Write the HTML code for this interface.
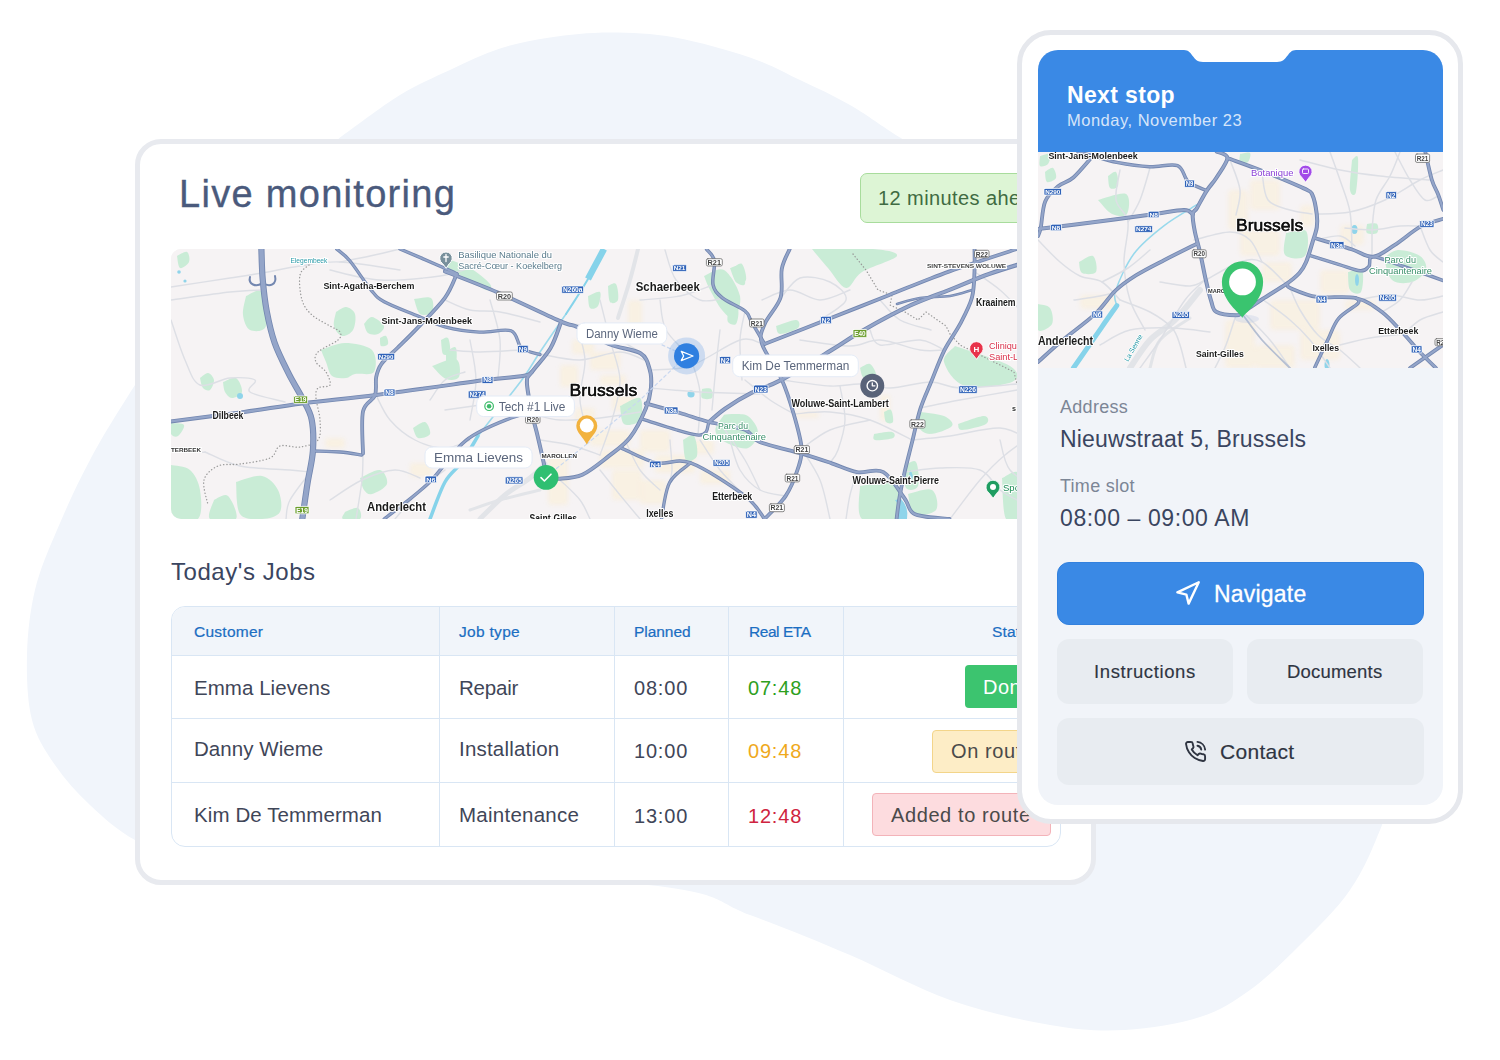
<!DOCTYPE html>
<html lang="en">
<head>
<meta charset="utf-8">
<title>Live monitoring</title>
<style>
*{box-sizing:border-box;margin:0;padding:0}
html,body{width:1500px;height:1060px;overflow:hidden;background:#fff}
body{position:relative;font-family:"Liberation Sans",Arial,sans-serif;color:#3a4560}
.abs{position:absolute}
.t{position:absolute;white-space:nowrap;line-height:1}
#blob{position:absolute;left:0;top:0;width:1500px;height:1060px}
#card{position:absolute;left:135px;top:139px;width:961px;height:746px;background:#fff;border:5px solid #e8eaef;border-radius:26px;overflow:hidden}
#cardin{position:absolute;left:-140px;top:-144px;width:1500px;height:1060px}
#map1{position:absolute;left:171px;top:249px;width:889px;height:270px;border-radius:10px;overflow:hidden;background:#f6f3f4}
#ahead{position:absolute;left:860px;top:173px;width:200px;height:50px;background:#ddf5d5;border:1px solid #a8dc9c;border-radius:7px}
#tbl{position:absolute;left:171px;top:606px;width:890px;height:241px;border:1px solid #d9e6f4;border-radius:14px;overflow:hidden;background:#fff}
#tbl .hd{position:absolute;left:0;top:0;width:100%;height:48px;background:#f1f5fa}
#tbl .hl{position:absolute;left:0;width:100%;height:1px;background:#d9e6f4}
#tbl .vl{position:absolute;top:0;height:100%;width:1px;background:#d9e6f4}
.th{color:#1b6ec2;font-size:15.5px;-webkit-text-stroke:0.22px #1b6ec2}
.td{color:#3f4658;font-size:20px}
.badge{position:absolute;height:43px;border-radius:4px;font-size:20px}
#phone{position:absolute;left:1017px;top:30px;width:446px;height:794px;background:#fff;border:5.5px solid #e6e8ed;border-radius:34px}
#screen{position:absolute;left:1038px;top:50px;width:405px;height:755px;background:#f1f4f9;border-radius:20px;overflow:hidden}
#scin{position:absolute;left:-1038px;top:-50px;width:1500px;height:1060px}
#phead{position:absolute;left:1038px;top:50px;width:405px;height:102px;background:#3a89e5}
#map2{position:absolute;left:1038px;top:152px;width:405px;height:216px;overflow:hidden;background:#f6f5f6}
.btn{position:absolute;border-radius:12px;background:#e8ecf1}
</style>
</head>
<body>
<svg id="blob" viewBox="0 0 1500 1060"><path d="M340.0 137.5 C350.0 130.4 381.7 106.2 400.0 95.0 C418.3 83.8 433.3 77.8 450.0 70.0 C466.7 62.2 483.3 53.9 500.0 48.5 C516.7 43.1 531.7 40.2 550.0 37.5 C568.3 34.8 589.2 32.5 610.0 32.5 C630.8 32.5 651.7 33.3 675.0 37.5 C698.3 41.7 729.2 50.4 750.0 57.5 C770.8 64.6 783.3 72.1 800.0 80.0 C816.7 87.9 833.3 95.4 850.0 105.0 C866.7 114.6 875.0 121.7 900.0 137.5 C925.0 153.3 958.3 171.2 1000.0 200.0 C1041.7 228.8 1100.0 266.7 1150.0 310.0 C1200.0 353.3 1258.3 408.3 1300.0 460.0 C1341.7 511.7 1380.3 576.7 1400.0 620.0 C1419.7 663.3 1421.0 685.8 1418.0 720.0 C1415.0 754.2 1393.3 796.7 1382.0 825.0 C1370.7 853.3 1363.7 870.0 1350.0 890.0 C1336.3 910.0 1316.7 928.3 1300.0 945.0 C1283.3 961.7 1266.7 978.0 1250.0 990.0 C1233.3 1002.0 1220.8 1010.3 1200.0 1017.0 C1179.2 1023.7 1150.0 1028.7 1125.0 1030.0 C1100.0 1031.3 1079.2 1030.0 1050.0 1025.0 C1020.8 1020.0 983.3 1011.7 950.0 1000.0 C916.7 988.3 883.3 969.2 850.0 955.0 C816.7 940.8 780.8 926.3 750.0 915.0 C719.2 903.7 723.3 894.5 665.0 887.0 C606.7 879.5 477.5 873.7 400.0 870.0 C322.5 866.3 244.2 870.0 200.0 865.0 C155.8 860.0 153.3 850.0 135.0 840.0 C116.7 830.0 103.3 817.5 90.0 805.0 C76.7 792.5 64.7 779.2 55.0 765.0 C45.3 750.8 36.7 738.3 32.0 720.0 C27.3 701.7 26.5 676.7 27.0 655.0 C27.5 633.3 30.0 610.8 35.0 590.0 C40.0 569.2 47.8 551.7 57.0 530.0 C66.2 508.3 77.0 484.2 90.0 460.0 C103.0 435.8 111.7 421.7 135.0 385.0 C158.3 348.3 195.8 281.2 230.0 240.0 C264.2 198.8 321.7 154.6 340.0 137.5Z" fill="#f1f5fb"/></svg>

<div id="card"><div id="cardin">
  <div class="t" id="ttl" style="left:179px;top:174.5px;font-size:38px;letter-spacing:1.3px;color:#4a5a7c;-webkit-text-stroke:0.35px #4a5a7c">Live monitoring</div>
  <div id="ahead"></div>
  <div class="t" id="aheadt" style="left:878px;top:188px;font-size:20px;letter-spacing:0.42px;color:#3f6b42">12 minutes ahead</div>
  <div id="map1"><svg width="889" height="270" viewBox="171 249 889 270" font-family="Liberation Sans, Arial, sans-serif" fill="none" stroke-linecap="round" stroke-linejoin="round"><rect x="171" y="249" width="889" height="270" fill="#f6f3f4"/><filter id="bl1" x="-20%" y="-20%" width="140%" height="140%"><feGaussianBlur stdDeviation="2.2"/></filter><g fill="#fbeed2" stroke="none" filter="url(#bl1)" opacity="0.6"><rect x="572" y="340" width="22" height="14" rx="3" opacity="0.85"/><rect x="590" y="352" width="30" height="18" rx="3" opacity="0.85"/><rect x="560" y="365" width="18" height="22" rx="3" opacity="0.85"/><rect x="600" y="375" width="26" height="10" rx="3" opacity="0.85"/><rect x="612" y="395" width="24" height="16" rx="3" opacity="0.85"/><rect x="575" y="408" width="20" height="14" rx="3" opacity="0.85"/><rect x="590" y="430" width="40" height="16" rx="3" opacity="0.85"/><rect x="600" y="450" width="44" height="18" rx="3" opacity="0.85"/><rect x="640" y="430" width="30" height="22" rx="3" opacity="0.85"/><rect x="655" y="455" width="40" height="18" rx="3" opacity="0.85"/><rect x="690" y="440" width="24" height="14" rx="3" opacity="0.85"/><rect x="628" y="300" width="14" height="30" rx="3" opacity="0.85"/><rect x="612" y="470" width="30" height="30" rx="3" opacity="0.85"/><rect x="548" y="455" width="20" height="50" rx="3" opacity="0.85"/><rect x="640" y="480" width="26" height="24" rx="3" opacity="0.85"/><rect x="700" y="470" width="30" height="14" rx="3" opacity="0.85"/><rect x="880" y="395" width="10" height="26" rx="3" opacity="0.85"/><rect x="795" y="412" width="24" height="6" rx="3" opacity="0.85"/><rect x="325" y="438" width="20" height="10" rx="3" opacity="0.85"/><rect x="410" y="463" width="22" height="14" rx="3" opacity="0.85"/></g><g><path d="M177.0 256.0 C178.7 255.3 185.0 251.0 187.0 252.0 C189.0 253.0 190.2 259.3 189.0 262.0 C187.8 264.7 182.0 269.0 180.0 268.0 C178.0 267.0 177.5 258.0 177.0 256.0Z" fill="#c9ecd6" stroke="none"/><path d="M246.0 296.0 C248.7 295.3 258.7 287.0 262.0 292.0 C265.3 297.0 268.0 319.7 266.0 326.0 C264.0 332.3 253.8 331.8 250.0 330.0 C246.2 328.2 243.7 320.7 243.0 315.0 C242.3 309.3 245.5 299.2 246.0 296.0Z" fill="#c9ecd6" stroke="none"/><path d="M336.0 312.0 C337.7 311.2 342.8 306.7 346.0 307.0 C349.2 307.3 353.8 310.2 355.0 314.0 C356.2 317.8 355.2 326.3 353.0 330.0 C350.8 333.7 345.2 336.7 342.0 336.0 C338.8 335.3 335.0 330.0 334.0 326.0 C333.0 322.0 335.7 314.3 336.0 312.0Z" fill="#c9ecd6" stroke="none"/><path d="M321.0 350.0 C325.0 348.8 336.5 343.0 345.0 343.0 C353.5 343.0 367.2 345.2 372.0 350.0 C376.8 354.8 376.8 368.0 374.0 372.0 C371.2 376.0 359.7 373.0 355.0 374.0 C350.3 375.0 349.8 377.7 346.0 378.0 C342.2 378.3 335.3 378.7 332.0 376.0 C328.7 373.3 327.8 366.3 326.0 362.0 C324.2 357.7 321.8 352.0 321.0 350.0Z" fill="#c9ecd6" stroke="none"/><path d="M364.0 324.0 C365.3 322.8 368.7 316.7 372.0 317.0 C375.3 317.3 383.0 323.2 384.0 326.0 C385.0 328.8 380.7 332.8 378.0 334.0 C375.3 335.2 370.3 334.7 368.0 333.0 C365.7 331.3 364.7 325.5 364.0 324.0Z" fill="#c9ecd6" stroke="none"/><path d="M380.0 338.0 C381.0 337.7 384.7 335.0 386.0 336.0 C387.3 337.0 388.8 342.3 388.0 344.0 C387.2 345.7 382.3 347.0 381.0 346.0 C379.7 345.0 380.2 339.3 380.0 338.0Z" fill="#c9ecd6" stroke="none"/><path d="M414.0 299.0 C416.8 298.8 428.0 295.8 431.0 298.0 C434.0 300.2 433.8 309.3 432.0 312.0 C430.2 314.7 423.0 316.2 420.0 314.0 C417.0 311.8 415.0 301.5 414.0 299.0Z" fill="#c9ecd6" stroke="none"/><path d="M432.0 366.0 C436.0 364.8 451.5 357.2 456.0 359.0 C460.5 360.8 460.7 373.7 459.0 377.0 C457.3 380.3 450.5 380.8 446.0 379.0 C441.5 377.2 434.3 368.2 432.0 366.0Z" fill="#c9ecd6" stroke="none"/><path d="M441.0 340.0 C442.2 339.7 446.5 336.0 448.0 338.0 C449.5 340.0 450.8 349.3 450.0 352.0 C449.2 354.7 444.5 356.0 443.0 354.0 C441.5 352.0 441.3 342.3 441.0 340.0Z" fill="#c9ecd6" stroke="none"/><path d="M200.0 378.0 C201.3 377.2 205.7 372.7 208.0 373.0 C210.3 373.3 213.7 377.2 214.0 380.0 C214.3 382.8 211.8 388.7 210.0 390.0 C208.2 391.3 204.7 390.0 203.0 388.0 C201.3 386.0 200.5 379.7 200.0 378.0Z" fill="#c9ecd6" stroke="none"/><path d="M223.0 382.0 C225.2 381.3 232.8 376.3 236.0 378.0 C239.2 379.7 242.7 388.7 242.0 392.0 C241.3 395.3 234.8 398.0 232.0 398.0 C229.2 398.0 226.5 394.7 225.0 392.0 C223.5 389.3 223.3 383.7 223.0 382.0Z" fill="#c9ecd6" stroke="none"/><path d="M413.0 428.0 C415.0 427.0 422.2 421.0 425.0 422.0 C427.8 423.0 431.2 431.3 430.0 434.0 C428.8 436.7 420.8 439.0 418.0 438.0 C415.2 437.0 413.8 429.7 413.0 428.0Z" fill="#c9ecd6" stroke="none"/><path d="M360.0 478.0 C363.3 476.7 375.5 469.0 380.0 470.0 C384.5 471.0 388.3 480.0 387.0 484.0 C385.7 488.0 375.8 493.0 372.0 494.0 C368.2 495.0 366.0 492.7 364.0 490.0 C362.0 487.3 360.7 480.0 360.0 478.0Z" fill="#c9ecd6" stroke="none"/><path d="M171.0 465.0 C174.2 465.8 185.2 465.8 190.0 470.0 C194.8 474.2 198.7 481.8 200.0 490.0 C201.3 498.2 202.8 514.2 198.0 519.0 C193.2 523.8 175.5 528.0 171.0 519.0 C166.5 510.0 171.0 474.0 171.0 465.0Z" fill="#c9ecd6" stroke="none"/><path d="M171.0 423.0 C173.2 423.3 182.8 422.8 184.0 425.0 C185.2 427.2 180.2 434.5 178.0 436.0 C175.8 437.5 172.2 436.2 171.0 434.0 C169.8 431.8 171.0 424.8 171.0 423.0Z" fill="#c9ecd6" stroke="none"/><path d="M236.0 482.0 C240.3 481.0 255.0 474.7 262.0 476.0 C269.0 477.3 275.0 484.0 278.0 490.0 C281.0 496.0 282.7 507.2 280.0 512.0 C277.3 516.8 268.7 518.7 262.0 519.0 C255.3 519.3 244.3 520.2 240.0 514.0 C235.7 507.8 236.7 487.3 236.0 482.0Z" fill="#c9ecd6" stroke="none"/><path d="M214.0 500.0 C216.3 499.3 224.3 492.8 228.0 496.0 C231.7 499.2 239.0 515.2 236.0 519.0 C233.0 522.8 213.7 522.2 210.0 519.0 C206.3 515.8 213.3 503.2 214.0 500.0Z" fill="#c9ecd6" stroke="none"/><path d="M345.0 512.0 C347.2 511.3 355.5 506.8 358.0 508.0 C360.5 509.2 362.5 517.2 360.0 519.0 C357.5 520.8 345.5 520.2 343.0 519.0 C340.5 517.8 344.7 513.2 345.0 512.0Z" fill="#c9ecd6" stroke="none"/><path d="M446.0 352.0 C447.7 351.3 454.5 344.7 456.0 348.0 C457.5 351.3 456.5 367.3 455.0 372.0 C453.5 376.7 448.5 379.3 447.0 376.0 C445.5 372.7 446.2 356.0 446.0 352.0Z" fill="#c9ecd6" stroke="none"/><path d="M445.0 258.0 C449.2 259.7 462.5 263.7 470.0 268.0 C477.5 272.3 487.3 280.3 490.0 284.0 C492.7 287.7 490.7 291.3 486.0 290.0 C481.3 288.7 468.8 279.3 462.0 276.0 C455.2 272.7 447.8 273.0 445.0 270.0 C442.2 267.0 445.0 260.0 445.0 258.0Z" fill="#c9ecd6" stroke="none"/><path d="M588.0 296.0 C590.0 295.3 598.3 290.3 600.0 292.0 C601.7 293.7 599.7 303.3 598.0 306.0 C596.3 308.7 591.7 309.7 590.0 308.0 C588.3 306.3 588.3 298.0 588.0 296.0Z" fill="#c9ecd6" stroke="none"/><path d="M608.0 286.0 C609.3 285.7 614.3 281.7 616.0 284.0 C617.7 286.3 619.0 297.0 618.0 300.0 C617.0 303.0 611.7 304.3 610.0 302.0 C608.3 299.7 608.3 288.7 608.0 286.0Z" fill="#c9ecd6" stroke="none"/><path d="M620.0 406.0 C623.3 404.7 636.7 395.7 640.0 398.0 C643.3 400.3 642.7 415.7 640.0 420.0 C637.3 424.3 627.3 426.3 624.0 424.0 C620.7 421.7 620.7 409.0 620.0 406.0Z" fill="#c9ecd6" stroke="none"/><path d="M683.0 440.0 C684.8 439.3 691.7 433.3 694.0 436.0 C696.3 438.7 698.3 452.0 697.0 456.0 C695.7 460.0 688.3 462.7 686.0 460.0 C683.7 457.3 683.5 443.3 683.0 440.0Z" fill="#c9ecd6" stroke="none"/><path d="M702.0 389.0 C703.5 389.0 709.3 387.5 711.0 389.0 C712.7 390.5 713.5 396.5 712.0 398.0 C710.5 399.5 703.7 399.5 702.0 398.0 C700.3 396.5 702.0 390.5 702.0 389.0Z" fill="#c9ecd6" stroke="none"/><path d="M704.0 276.0 C707.3 275.0 718.0 266.7 724.0 270.0 C730.0 273.3 738.3 288.0 740.0 296.0 C741.7 304.0 737.0 315.7 734.0 318.0 C731.0 320.3 726.0 314.7 722.0 310.0 C718.0 305.3 713.0 295.7 710.0 290.0 C707.0 284.3 705.0 278.3 704.0 276.0Z" fill="#c9ecd6" stroke="none"/><path d="M730.0 268.0 C732.0 267.7 739.5 263.3 742.0 266.0 C744.5 268.7 746.0 281.3 745.0 284.0 C744.0 286.7 738.5 284.7 736.0 282.0 C733.5 279.3 731.0 270.3 730.0 268.0Z" fill="#c9ecd6" stroke="none"/><path d="M724.0 414.7 C726.0 414.6 731.9 413.7 736.0 414.0 C740.1 414.3 745.2 413.6 748.9 416.7 C752.6 419.8 758.2 427.2 758.0 432.5 C757.8 437.8 753.2 446.7 747.5 448.2 C741.8 449.7 729.4 444.7 724.0 441.6 C718.6 438.5 715.4 434.3 715.4 429.8 C715.4 425.3 722.6 417.2 724.0 414.7Z" fill="#c9ecd6" stroke="none"/><path d="M728.0 312.0 C729.7 311.7 736.7 308.0 738.0 310.0 C739.3 312.0 737.7 322.0 736.0 324.0 C734.3 326.0 729.3 324.0 728.0 322.0 C726.7 320.0 728.0 313.7 728.0 312.0Z" fill="#c9ecd6" stroke="none"/><path d="M812.0 249.0 C822.2 249.0 858.8 247.8 873.0 249.0 C887.2 250.2 898.8 252.2 897.0 256.0 C895.2 259.8 870.5 266.7 862.0 272.0 C853.5 277.3 851.7 288.7 846.0 288.0 C840.3 287.3 833.7 274.5 828.0 268.0 C822.3 261.5 814.7 252.2 812.0 249.0Z" fill="#c9ecd6" stroke="none"/><path d="M733.0 268.0 C734.5 267.3 739.8 262.0 742.0 264.0 C744.2 266.0 747.0 277.0 746.0 280.0 C745.0 283.0 738.2 284.0 736.0 282.0 C733.8 280.0 733.5 270.3 733.0 268.0Z" fill="#c9ecd6" stroke="none"/><path d="M776.0 326.0 C779.3 325.0 792.3 319.7 796.0 320.0 C799.7 320.3 800.7 325.7 798.0 328.0 C795.3 330.3 783.7 334.3 780.0 334.0 C776.3 333.7 776.7 327.3 776.0 326.0Z" fill="#c9ecd6" stroke="none"/><path d="M860.0 368.0 C861.7 367.3 867.3 362.7 870.0 364.0 C872.7 365.3 877.0 373.7 876.0 376.0 C875.0 378.3 866.7 379.3 864.0 378.0 C861.3 376.7 860.7 369.7 860.0 368.0Z" fill="#c9ecd6" stroke="none"/><path d="M955.0 346.0 C964.2 349.3 1000.5 360.0 1010.0 366.0 C1019.5 372.0 1019.5 378.7 1012.0 382.0 C1004.5 385.3 976.3 389.3 965.0 386.0 C953.7 382.7 945.7 368.7 944.0 362.0 C942.3 355.3 953.2 348.7 955.0 346.0Z" fill="#c9ecd6" stroke="none"/><path d="M920.0 412.0 C924.0 412.7 938.7 413.7 944.0 416.0 C949.3 418.3 954.3 423.0 952.0 426.0 C949.7 429.0 935.7 434.0 930.0 434.0 C924.3 434.0 919.7 429.7 918.0 426.0 C916.3 422.3 919.7 414.3 920.0 412.0Z" fill="#c9ecd6" stroke="none"/><path d="M958.0 424.0 C962.3 422.7 979.3 416.0 984.0 416.0 C988.7 416.0 989.7 421.7 986.0 424.0 C982.3 426.3 966.7 430.0 962.0 430.0 C957.3 430.0 958.7 425.0 958.0 424.0Z" fill="#c9ecd6" stroke="none"/><path d="M874.0 434.0 C877.0 433.7 888.8 431.3 892.0 432.0 C895.2 432.7 895.8 436.7 893.0 438.0 C890.2 439.3 878.2 440.7 875.0 440.0 C871.8 439.3 874.2 435.0 874.0 434.0Z" fill="#c9ecd6" stroke="none"/><path d="M884.0 412.0 C885.2 411.7 889.5 408.3 891.0 410.0 C892.5 411.7 893.8 420.0 893.0 422.0 C892.2 424.0 887.5 423.7 886.0 422.0 C884.5 420.3 884.3 413.7 884.0 412.0Z" fill="#c9ecd6" stroke="none"/><path d="M860.0 486.0 C865.7 485.7 887.7 478.5 894.0 484.0 C900.3 489.5 903.3 513.2 898.0 519.0 C892.7 524.8 868.3 524.5 862.0 519.0 C855.7 513.5 860.3 491.5 860.0 486.0Z" fill="#c9ecd6" stroke="none"/><path d="M908.0 494.0 C912.0 493.3 927.3 487.3 932.0 490.0 C936.7 492.7 939.0 506.0 936.0 510.0 C933.0 514.0 918.7 516.7 914.0 514.0 C909.3 511.3 909.0 497.3 908.0 494.0Z" fill="#c9ecd6" stroke="none"/><path d="M904.0 466.0 C906.0 465.3 913.7 458.7 916.0 462.0 C918.3 465.3 919.7 481.7 918.0 486.0 C916.3 490.3 908.3 491.3 906.0 488.0 C903.7 484.7 904.3 469.7 904.0 466.0Z" fill="#c9ecd6" stroke="none"/><path d="M1002.0 478.0 C1005.0 477.3 1016.3 467.2 1020.0 474.0 C1023.7 480.8 1026.3 511.5 1024.0 519.0 C1021.7 526.5 1009.7 525.8 1006.0 519.0 C1002.3 512.2 1002.7 484.8 1002.0 478.0Z" fill="#c9ecd6" stroke="none"/></g><g stroke="#86d3ea"><path d="M604.0 249.0 C602.7 251.5 598.7 259.0 596.0 264.0 C593.3 269.0 589.3 276.5 588.0 279.0" stroke-width="6.5" stroke-linecap="butt"/><path d="M588.0 279.0 C586.2 282.0 580.7 291.2 577.0 297.0 C573.3 302.8 567.8 311.2 566.0 314.0" stroke-width="2"/><path d="M566.0 314.0 C561.7 320.3 547.0 341.5 540.0 352.0 C533.0 362.5 530.7 367.7 524.0 377.0 C517.3 386.3 507.7 398.2 500.0 408.0 C492.3 417.8 481.7 431.3 478.0 436.0" stroke-width="1.6" opacity="0.8"/><path d="M478.0 436.0 C475.3 440.3 467.5 454.3 462.0 462.0 C456.5 469.7 450.3 472.5 445.0 482.0 C439.7 491.5 432.5 512.8 430.0 519.0" stroke-width="3.5"/></g><g fill="#8fd4ea" stroke="none"><circle cx="240" cy="396" r="3"/><circle cx="179" cy="272" r="1.8"/><circle cx="185" cy="281" r="1.6"/><circle cx="691" cy="394" r="3.6"/><path d="M895 500 q6 6 2 19 h10 q2 -12 -6 -20z"/><path d="M910 470 q4 4 2 10 q-4 -2 -2 -10z"/></g><g stroke="#e2e4e8"><path d="M638.0 249.0 C636.7 254.2 633.3 268.5 630.0 280.0 C626.7 291.5 620.0 311.7 618.0 318.0" stroke-width="4"/><path d="M480.0 519.0 C484.2 515.0 496.7 501.8 505.0 495.0 C513.3 488.2 523.3 483.2 530.0 478.0 C536.7 472.8 542.5 466.3 545.0 464.0" stroke-width="5"/><path d="M470.0 510.0 C475.0 508.3 488.3 503.3 500.0 500.0 C511.7 496.7 533.3 491.7 540.0 490.0" stroke-width="3"/></g><g><path d="M171.0 287.0 C180.8 285.5 214.8 280.3 230.0 278.0 C245.2 275.7 250.3 275.0 262.0 273.0 C273.7 271.0 287.0 267.8 300.0 266.0 C313.0 264.2 323.3 261.3 340.0 262.0 C356.7 262.7 390.0 268.7 400.0 270.0" stroke="#dddfe5" stroke-width="1.4"/><path d="M171.0 300.0 C180.8 298.7 214.8 293.7 230.0 292.0 C245.2 290.3 256.7 290.3 262.0 290.0" stroke="#dddfe5" stroke-width="1.4"/><path d="M171.0 320.0 C173.3 326.7 180.2 349.2 185.0 360.0 C189.8 370.8 192.5 382.0 200.0 385.0 C207.5 388.0 220.8 378.8 230.0 378.0 C239.2 377.2 251.7 377.7 255.0 380.0 C258.3 382.3 245.0 388.3 250.0 392.0 C255.0 395.7 279.2 400.3 285.0 402.0" stroke="#dddfe5" stroke-width="1.4"/><path d="M205.0 452.0 C210.8 454.3 225.8 463.0 240.0 466.0 C254.2 469.0 278.3 469.0 290.0 470.0 C301.7 471.0 306.7 471.7 310.0 472.0" stroke="#dddfe5" stroke-width="1.4"/><path d="M340.0 262.0 C345.0 261.0 360.0 258.2 370.0 256.0 C380.0 253.8 395.0 250.2 400.0 249.0" stroke="#dddfe5" stroke-width="1.4"/><path d="M330.0 270.0 C338.3 271.7 361.7 279.0 380.0 280.0 C398.3 281.0 425.0 278.0 440.0 276.0 C455.0 274.0 465.0 269.3 470.0 268.0" stroke="#dddfe5" stroke-width="1.4"/><path d="M376.0 395.0 C378.3 399.2 383.5 412.5 390.0 420.0 C396.5 427.5 405.8 435.3 415.0 440.0 C424.2 444.7 435.8 448.0 445.0 448.0 C454.2 448.0 465.8 441.3 470.0 440.0" stroke="#dddfe5" stroke-width="1.4"/><path d="M430.0 400.0 C432.5 396.7 439.2 384.7 445.0 380.0 C450.8 375.3 461.7 373.3 465.0 372.0" stroke="#dddfe5" stroke-width="1.4"/><path d="M363.0 454.0 C362.8 458.3 363.2 469.2 362.0 480.0 C360.8 490.8 357.0 512.5 356.0 519.0" stroke="#dddfe5" stroke-width="1.4"/><path d="M330.0 500.0 C335.3 496.7 351.2 485.0 362.0 480.0 C372.8 475.0 385.3 470.3 395.0 470.0 C404.7 469.7 415.8 476.7 420.0 478.0" stroke="#dddfe5" stroke-width="1.4"/><path d="M312.0 470.0 C308.3 475.0 294.3 491.8 290.0 500.0 C285.7 508.2 286.7 515.8 286.0 519.0" stroke="#dddfe5" stroke-width="1.4"/><path d="M395.0 519.0 C399.2 514.2 411.7 498.2 420.0 490.0 C428.3 481.8 440.8 473.3 445.0 470.0" stroke="#dddfe5" stroke-width="1.4"/><path d="M445.0 300.0 C449.2 301.7 460.8 308.0 470.0 310.0 C479.2 312.0 488.3 310.0 500.0 312.0 C511.7 314.0 533.3 320.3 540.0 322.0" stroke="#dddfe5" stroke-width="1.4"/><path d="M470.0 340.0 C471.0 346.7 476.0 366.7 476.0 380.0 C476.0 393.3 471.0 413.3 470.0 420.0" stroke="#dddfe5" stroke-width="1.4"/><path d="M490.0 300.0 C491.7 306.7 498.7 327.0 500.0 340.0 C501.3 353.0 498.3 371.7 498.0 378.0" stroke="#dddfe5" stroke-width="1.4"/><path d="M445.0 410.0 C450.8 409.2 466.7 407.0 480.0 405.0 C493.3 403.0 517.5 399.2 525.0 398.0" stroke="#dddfe5" stroke-width="1.4"/><path d="M450.0 350.0 C455.0 350.3 468.3 352.0 480.0 352.0 C491.7 352.0 513.3 350.3 520.0 350.0" stroke="#dddfe5" stroke-width="1.4"/><path d="M560.0 322.0 C566.7 323.3 586.7 325.0 600.0 330.0 C613.3 335.0 633.3 348.3 640.0 352.0" stroke="#dddfe5" stroke-width="1.4"/><path d="M577.0 326.0 C578.3 331.7 584.5 347.7 585.0 360.0 C585.5 372.3 579.2 386.7 580.0 400.0 C580.8 413.3 588.3 433.3 590.0 440.0" stroke="#dddfe5" stroke-width="1.4"/><path d="M600.0 300.0 C601.7 306.7 606.7 326.7 610.0 340.0 C613.3 353.3 619.7 366.7 620.0 380.0 C620.3 393.3 615.3 407.5 612.0 420.0 C608.7 432.5 602.0 449.2 600.0 455.0" stroke="#dddfe5" stroke-width="1.4"/><path d="M540.0 354.0 C546.7 355.0 566.7 360.3 580.0 360.0 C593.3 359.7 608.7 351.7 620.0 352.0 C631.3 352.3 643.3 360.3 648.0 362.0" stroke="#dddfe5" stroke-width="1.4"/><path d="M532.0 414.0 C536.7 415.0 548.7 419.3 560.0 420.0 C571.3 420.7 586.7 419.3 600.0 418.0 C613.3 416.7 633.3 413.0 640.0 412.0" stroke="#dddfe5" stroke-width="1.4"/><path d="M540.0 440.0 C545.0 440.8 560.0 442.5 570.0 445.0 C580.0 447.5 595.0 453.3 600.0 455.0" stroke="#dddfe5" stroke-width="1.4"/><path d="M560.0 480.0 C563.3 483.3 575.0 493.5 580.0 500.0 C585.0 506.5 588.3 515.8 590.0 519.0" stroke="#dddfe5" stroke-width="1.4"/><path d="M600.0 470.0 C603.3 474.2 613.3 486.8 620.0 495.0 C626.7 503.2 636.7 515.0 640.0 519.0" stroke="#dddfe5" stroke-width="1.4"/><path d="M625.0 440.0 C627.5 445.0 634.2 461.7 640.0 470.0 C645.8 478.3 656.7 486.7 660.0 490.0" stroke="#dddfe5" stroke-width="1.4"/><path d="M650.0 370.0 C656.7 369.3 675.0 371.0 690.0 366.0 C705.0 361.0 728.0 343.7 740.0 340.0 C752.0 336.3 758.3 343.3 762.0 344.0" stroke="#dddfe5" stroke-width="1.4"/><path d="M650.0 388.0 C658.3 388.7 681.7 391.0 700.0 392.0 C718.3 393.0 750.0 393.7 760.0 394.0" stroke="#dddfe5" stroke-width="1.4"/><path d="M660.0 300.0 C661.0 305.0 661.0 320.7 666.0 330.0 C671.0 339.3 686.0 351.7 690.0 356.0" stroke="#dddfe5" stroke-width="1.4"/><path d="M640.0 300.0 C646.7 299.3 667.8 298.5 680.0 296.0 C692.2 293.5 707.5 286.8 713.0 285.0" stroke="#dddfe5" stroke-width="1.4"/><path d="M690.0 356.0 C691.7 362.0 698.7 378.8 700.0 392.0 C701.3 405.2 698.3 427.8 698.0 435.0" stroke="#dddfe5" stroke-width="1.4"/><path d="M720.0 330.0 C719.3 336.0 717.3 352.7 716.0 366.0 C714.7 379.3 712.7 402.7 712.0 410.0" stroke="#dddfe5" stroke-width="1.4"/><path d="M745.0 311.0 C744.2 315.8 740.5 328.5 740.0 340.0 C739.5 351.5 741.7 373.3 742.0 380.0" stroke="#dddfe5" stroke-width="1.4"/><path d="M665.0 250.0 C666.8 255.0 670.2 271.7 676.0 280.0 C681.8 288.3 691.8 297.0 700.0 300.0 C708.2 303.0 720.8 298.3 725.0 298.0" stroke="#dddfe5" stroke-width="1.4"/><path d="M700.0 440.0 C703.3 445.0 712.5 460.7 720.0 470.0 C727.5 479.3 740.8 491.7 745.0 496.0" stroke="#dddfe5" stroke-width="1.4"/><path d="M670.0 440.0 C670.3 445.0 672.2 462.8 672.0 470.0 C671.8 477.2 669.5 480.8 669.0 483.0" stroke="#dddfe5" stroke-width="1.4"/><path d="M730.0 440.0 C731.7 445.0 735.0 461.7 740.0 470.0 C745.0 478.3 752.3 485.7 760.0 490.0 C767.7 494.3 781.7 495.0 786.0 496.0" stroke="#dddfe5" stroke-width="1.4"/><path d="M745.0 380.0 C749.2 383.3 761.8 394.3 770.0 400.0 C778.2 405.7 790.0 411.7 794.0 414.0" stroke="#dddfe5" stroke-width="1.4"/><path d="M762.0 300.0 C766.7 298.3 780.3 290.0 790.0 290.0 C799.7 290.0 810.0 300.0 820.0 300.0 C830.0 300.0 845.0 291.7 850.0 290.0" stroke="#dddfe5" stroke-width="1.4"/><path d="M781.0 298.0 C784.2 294.7 791.8 280.7 800.0 278.0 C808.2 275.3 822.3 278.3 830.0 282.0 C837.7 285.7 847.7 293.7 846.0 300.0 C844.3 306.3 824.3 316.7 820.0 320.0" stroke="#dddfe5" stroke-width="1.4"/><path d="M800.0 340.0 C808.3 341.0 836.7 346.0 850.0 346.0 C863.3 346.0 868.3 339.3 880.0 340.0 C891.7 340.7 909.3 348.3 920.0 350.0 C930.7 351.7 940.0 350.0 944.0 350.0" stroke="#dddfe5" stroke-width="1.4"/><path d="M782.0 380.0 C790.0 381.0 817.0 385.3 830.0 386.0 C843.0 386.7 850.0 383.7 860.0 384.0 C870.0 384.3 878.2 388.3 890.0 388.0 C901.8 387.7 919.3 382.0 931.0 382.0 C942.7 382.0 945.7 387.7 960.0 388.0 C974.3 388.3 1007.5 384.7 1017.0 384.0" stroke="#dddfe5" stroke-width="1.4"/><path d="M840.0 386.0 C840.8 391.7 845.3 409.3 845.0 420.0 C844.7 430.7 840.5 442.8 838.0 450.0 C835.5 457.2 831.3 460.8 830.0 463.0" stroke="#dddfe5" stroke-width="1.4"/><path d="M794.0 414.0 C800.0 413.7 817.3 411.0 830.0 412.0 C842.7 413.0 856.3 415.3 870.0 420.0 C883.7 424.7 905.0 436.7 912.0 440.0" stroke="#dddfe5" stroke-width="1.4"/><path d="M800.0 450.0 C805.0 446.7 818.3 435.0 830.0 430.0 C841.7 425.0 863.3 421.7 870.0 420.0" stroke="#dddfe5" stroke-width="1.4"/><path d="M801.0 448.0 C804.2 453.3 815.2 468.2 820.0 480.0 C824.8 491.8 828.3 512.5 830.0 519.0" stroke="#dddfe5" stroke-width="1.4"/><path d="M857.0 472.0 C855.8 475.8 851.8 487.2 850.0 495.0 C848.2 502.8 846.7 515.0 846.0 519.0" stroke="#dddfe5" stroke-width="1.4"/><path d="M912.0 440.0 C918.3 439.3 935.3 438.0 950.0 436.0 C964.7 434.0 986.7 427.3 1000.0 428.0 C1013.3 428.7 1025.0 438.0 1030.0 440.0" stroke="#dddfe5" stroke-width="1.4"/><path d="M905.0 472.0 C910.8 471.3 927.5 468.3 940.0 468.0 C952.5 467.7 970.0 466.3 980.0 470.0 C990.0 473.7 993.8 485.0 1000.0 490.0 C1006.2 495.0 1014.2 498.3 1017.0 500.0" stroke="#dddfe5" stroke-width="1.4"/><path d="M920.0 408.0 C926.7 406.7 943.8 403.0 960.0 400.0 C976.2 397.0 1007.5 391.7 1017.0 390.0" stroke="#dddfe5" stroke-width="1.4"/><path d="M950.0 519.0 C955.0 512.5 970.8 490.7 980.0 480.0 C989.2 469.3 995.0 463.3 1005.0 455.0 C1015.0 446.7 1034.2 434.2 1040.0 430.0" stroke="#dddfe5" stroke-width="1.4"/><path d="M975.0 272.0 C979.2 275.0 992.5 283.7 1000.0 290.0 C1007.5 296.3 1016.7 306.7 1020.0 310.0" stroke="#dddfe5" stroke-width="1.4"/><path d="M870.0 330.0 C871.7 332.5 871.7 343.3 880.0 345.0 C888.3 346.7 909.3 339.2 920.0 340.0 C930.7 340.8 940.0 348.3 944.0 350.0" stroke="#dddfe5" stroke-width="1.4"/><path d="M880.0 300.0 C883.3 303.3 891.5 315.0 900.0 320.0 C908.5 325.0 925.8 328.3 931.0 330.0" stroke="#dddfe5" stroke-width="1.4"/><path d="M1000.0 440.0 C1001.7 445.0 1003.3 461.7 1010.0 470.0 C1016.7 478.3 1035.0 486.7 1040.0 490.0" stroke="#dddfe5" stroke-width="1.4"/><path d="M725.0 430.0 C728.3 435.0 739.2 450.0 745.0 460.0 C750.8 470.0 757.5 485.0 760.0 490.0" stroke="#dddfe5" stroke-width="1.4"/><path d="M171.0 449.0 C175.8 449.5 194.3 451.5 200.0 452.0 C205.7 452.5 204.2 452.0 205.0 452.0" stroke="#dddfe5" stroke-width="1.4"/></g><g stroke="#9a9a9a" stroke-width="1.3" stroke-dasharray="0.3 3"><path d="M309.0 265.0 C307.5 266.7 301.2 269.2 300.0 275.0 C298.8 280.8 300.0 293.3 302.0 300.0 C304.0 306.7 307.3 310.7 312.0 315.0 C316.7 319.3 325.3 323.2 330.0 326.0 C334.7 328.8 338.7 329.7 340.0 332.0 C341.3 334.3 341.7 336.7 338.0 340.0 C334.3 343.3 321.7 348.3 318.0 352.0 C314.3 355.7 314.7 358.7 316.0 362.0 C317.3 365.3 323.7 368.2 326.0 372.0 C328.3 375.8 331.3 382.3 330.0 385.0 C328.7 387.7 320.3 385.8 318.0 388.0 C315.7 390.2 315.7 392.7 316.0 398.0 C316.3 403.3 319.7 413.0 320.0 420.0 C320.3 427.0 321.3 435.5 318.0 440.0 C314.7 444.5 306.3 446.0 300.0 447.0 C293.7 448.0 285.0 444.2 280.0 446.0 C275.0 447.8 276.7 455.0 270.0 458.0 C263.3 461.0 248.7 462.7 240.0 464.0 C231.3 465.3 224.0 463.3 218.0 466.0 C212.0 468.7 205.7 473.5 204.0 480.0 C202.3 486.5 207.3 500.8 208.0 505.0"/><path d="M853.0 254.0 L866.0 270.0 L878.0 290.0 L892.0 295.0 L890.0 305.0 L905.0 312.0 L918.0 320.0 L926.0 312.0 L946.0 326.0 L950.0 334.0 L960.0 345.0 L1014.0 372.0 L1017.0 384.0"/></g><g><path d="M262 283 C256 288 248 284 250 277 M263 283 C270 288 277 284 275 276" stroke="#7387b0" stroke-width="2"/><path d="M261.4 249.0 C261.6 254.1 261.8 269.0 262.7 279.3 C263.6 289.6 264.7 300.4 266.7 311.0 C268.7 321.6 270.9 332.1 274.6 342.7 C278.3 353.3 284.5 365.1 289.1 374.4 C293.7 383.6 298.6 390.7 302.3 398.2 C306.1 405.7 309.8 410.5 311.6 419.3 C313.4 428.1 313.6 440.4 312.9 451.0 C312.2 461.6 309.4 471.4 307.6 482.7 C305.8 494.0 303.2 513.0 302.3 519.0" stroke="#7387b0" stroke-width="6.2"/><path d="M170.8 421.4 C183.0 419.8 222.3 414.9 244.2 411.9 C266.1 408.9 280.3 406.2 302.3 403.4 C324.3 400.6 349.1 398.4 376.2 395.0 C403.3 391.6 446.5 385.4 465.0 382.8 C483.5 380.2 477.3 380.9 487.2 379.7 C497.1 378.5 516.7 377.0 524.2 375.7 C531.7 374.4 530.8 372.4 532.1 371.7" stroke="#7387b0" stroke-width="4.0"/><path d="M456.8 274.0 C454.8 278.0 451.3 289.0 444.9 297.8 C438.5 306.6 426.4 318.5 418.5 326.9 C410.6 335.3 403.6 341.9 397.4 348.0 C391.2 354.1 385.0 359.0 381.5 363.8 C378.0 368.6 377.3 371.7 376.2 377.0 C375.1 382.3 377.1 389.8 374.9 395.5 C372.7 401.2 365.0 401.7 363.0 411.4 C361.0 421.1 363.0 446.6 363.0 453.6" stroke="#7387b0" stroke-width="3.8"/><path d="M312.9 451.0 C317.4 451.2 331.9 451.3 340.0 452.0 C348.1 452.7 358.1 454.5 361.7 455.0" stroke="#7387b0" stroke-width="3.3"/><path d="M336.6 249.0 C338.8 251.0 344.1 254.0 349.8 260.8 C355.5 267.6 365.3 283.1 371.0 289.9 C376.7 296.7 376.3 297.4 384.2 301.8 C392.1 306.2 408.4 312.1 418.5 316.3 C428.6 320.5 434.9 324.3 445.0 326.9 C455.1 329.5 468.3 331.5 479.3 332.1 C490.3 332.8 503.9 328.2 511.0 330.8 C518.0 333.4 516.8 344.0 521.6 348.0 C526.4 352.0 536.9 353.5 540.0 354.6" stroke="#7387b0" stroke-width="3.3"/><path d="M400.0 249.0 C406.6 251.8 430.1 261.8 439.6 266.0 C449.1 270.2 455.9 273.1 456.8 274.0 C457.7 274.9 447.0 271.8 445.0 271.4" stroke="#7387b0" stroke-width="3.5"/><path d="M445.0 271.4 C453.8 274.9 478.4 284.1 497.8 292.5 C517.2 300.9 548.0 315.9 561.2 321.6 C574.4 327.3 569.1 323.2 577.0 326.9 C584.9 330.6 598.1 339.6 608.7 344.0 C619.3 348.4 633.6 349.1 640.4 353.3 C647.2 357.5 647.8 363.4 649.6 369.1 C651.4 374.8 651.6 381.0 651.0 387.6 C650.4 394.2 649.2 400.3 645.7 408.7 C642.2 417.1 636.0 429.9 629.8 437.8 C623.6 445.7 616.6 450.1 608.7 456.2 C600.8 462.3 590.7 470.9 582.3 474.7 C573.9 478.4 564.5 478.2 558.5 478.7 C552.5 479.1 548.1 477.6 546.0 477.4" stroke="#7387b0" stroke-width="4.0"/><path d="M561.2 321.6 C559.4 326.0 555.5 339.6 550.6 348.0 C545.8 356.4 536.1 366.0 532.1 371.7 C528.1 377.4 526.9 375.2 526.9 382.3 C526.9 389.4 530.4 405.2 532.1 414.0 C533.9 422.8 535.4 426.7 537.4 435.1 C539.4 443.5 542.5 457.1 544.0 464.2 C545.5 471.2 545.8 475.2 546.1 477.4" stroke="#7387b0" stroke-width="4.0"/><path d="M384.2 519.0 C391.7 513.0 415.4 495.8 429.0 482.7 C442.6 469.6 452.3 451.2 466.0 440.4 C479.7 429.6 500.0 422.4 511.0 418.0 C522.0 413.6 528.5 414.7 532.0 414.0" stroke="#7387b0" stroke-width="3.5"/><path d="M645.7 403.4 C651.4 405.0 669.5 409.9 680.0 413.0 C690.5 416.1 698.2 419.2 709.0 422.0 C719.8 424.8 736.6 426.5 745.0 429.8 C753.4 433.1 749.9 437.7 759.3 441.7 C768.7 445.7 789.7 450.1 801.6 453.6 C813.5 457.1 821.4 459.8 830.6 462.9 C839.8 466.0 848.2 470.6 857.0 472.1 C865.8 473.6 875.5 467.7 883.4 472.1 C891.3 476.5 899.3 491.5 904.6 498.5 C909.9 505.5 907.6 510.9 915.1 514.3 C922.6 517.7 943.8 518.2 949.5 519.0" stroke="#7387b0" stroke-width="3.8"/><path d="M643.0 419.3 C652.2 421.9 687.5 434.7 698.5 435.1 C709.5 435.6 707.2 424.2 709.0 422.0" stroke="#7387b0" stroke-width="3.3"/><path d="M709.0 422.0 C711.7 419.8 717.9 413.6 725.0 408.7 C732.1 403.8 741.9 397.7 751.4 392.9 C760.9 388.1 768.6 386.8 781.8 379.7 C795.0 372.6 817.2 358.8 830.6 350.6 C844.0 342.5 849.1 338.3 862.3 330.8 C875.5 323.3 895.3 312.5 909.8 305.7 C924.3 298.9 936.3 295.2 949.5 289.9 C962.7 284.6 975.6 278.8 989.0 274.0 C1002.4 269.2 1018.2 264.7 1030.0 261.0 C1041.8 257.3 1055.0 253.5 1060.0 252.0" stroke="#7387b0" stroke-width="4.2"/><path d="M622.0 448.3 C627.7 450.7 644.9 460.5 656.3 462.9 C667.7 465.3 675.8 457.4 690.6 462.9 C705.4 468.4 732.7 486.5 745.0 495.9 C757.3 505.2 761.3 515.1 764.6 519.0" stroke="#7387b0" stroke-width="3.5"/><path d="M690.6 462.9 C687.1 466.2 674.4 473.3 669.5 482.7 C664.6 492.1 662.8 513.0 661.5 519.0" stroke="#7387b0" stroke-width="3.3"/><path d="M706.4 249.0 C707.7 251.0 713.3 254.9 714.4 260.8 C715.5 266.7 711.7 278.4 713.0 284.6 C714.3 290.8 717.0 293.4 722.3 297.8 C727.6 302.2 740.1 307.0 745.0 311.0 C749.9 315.0 748.1 316.1 751.4 321.6 C754.7 327.1 762.4 340.3 764.6 344.0" stroke="#7387b0" stroke-width="3.5"/><path d="M789.7 249.0 C788.4 252.3 783.3 260.7 781.8 268.8 C780.3 276.9 783.4 288.6 780.5 297.8 C777.6 307.0 767.7 316.5 764.6 324.2 C761.5 331.9 759.1 334.8 762.0 344.0 C764.9 353.2 776.5 368.0 781.8 379.7 C787.1 391.4 790.4 402.6 793.7 414.0 C797.0 425.4 801.0 439.1 801.6 448.3 C802.2 457.6 800.2 461.6 797.6 469.5 C795.0 477.4 791.2 487.6 785.7 495.9 C780.2 504.1 768.1 515.1 764.6 519.0" stroke="#7387b0" stroke-width="3.8"/><path d="M764.6 344.0 C774.7 340.1 804.6 328.4 825.3 320.3 C846.0 312.2 868.0 303.4 888.7 295.2 C909.4 287.0 928.1 279.1 949.5 271.4 C970.9 263.7 1005.6 252.7 1016.8 249.0" stroke="#7387b0" stroke-width="3.8"/><path d="M974.5 249.0 C974.5 252.7 974.9 263.3 974.5 271.4 C974.1 279.5 974.3 289.0 971.9 297.8 C969.5 306.6 964.6 315.4 960.0 324.2 C955.4 333.0 949.0 340.9 944.2 350.6 C939.4 360.3 935.0 372.6 931.0 382.3 C927.0 392.0 923.5 399.0 920.4 408.7 C917.3 418.4 915.1 429.8 912.5 440.4 C909.9 451.0 906.8 462.4 904.6 472.1 C902.4 481.8 900.6 490.7 899.3 498.5 C898.0 506.3 897.0 515.6 896.6 519.0" stroke="#7387b0" stroke-width="3.8"/><path d="M897.0 304.0 C900.8 303.0 911.2 299.3 920.0 298.0 C928.8 296.7 941.3 297.3 950.0 296.0 C958.7 294.7 968.3 291.0 972.0 290.0" stroke="#7387b0" stroke-width="2.6"/><path d="M261.4 249.0 C261.6 254.1 261.8 269.0 262.7 279.3 C263.6 289.6 264.7 300.4 266.7 311.0 C268.7 321.6 270.9 332.1 274.6 342.7 C278.3 353.3 284.5 365.1 289.1 374.4 C293.7 383.6 298.6 390.7 302.3 398.2 C306.1 405.7 309.8 410.5 311.6 419.3 C313.4 428.1 313.6 440.4 312.9 451.0 C312.2 461.6 309.4 471.4 307.6 482.7 C305.8 494.0 303.2 513.0 302.3 519.0" stroke="#94a5c9" stroke-width="4.5"/><path d="M170.8 421.4 C183.0 419.8 222.3 414.9 244.2 411.9 C266.1 408.9 280.3 406.2 302.3 403.4 C324.3 400.6 349.1 398.4 376.2 395.0 C403.3 391.6 446.5 385.4 465.0 382.8 C483.5 380.2 477.3 380.9 487.2 379.7 C497.1 378.5 516.7 377.0 524.2 375.7 C531.7 374.4 530.8 372.4 532.1 371.7" stroke="#94a5c9" stroke-width="2.3"/><path d="M456.8 274.0 C454.8 278.0 451.3 289.0 444.9 297.8 C438.5 306.6 426.4 318.5 418.5 326.9 C410.6 335.3 403.6 341.9 397.4 348.0 C391.2 354.1 385.0 359.0 381.5 363.8 C378.0 368.6 377.3 371.7 376.2 377.0 C375.1 382.3 377.1 389.8 374.9 395.5 C372.7 401.2 365.0 401.7 363.0 411.4 C361.0 421.1 363.0 446.6 363.0 453.6" stroke="#94a5c9" stroke-width="2.1"/><path d="M312.9 451.0 C317.4 451.2 331.9 451.3 340.0 452.0 C348.1 452.7 358.1 454.5 361.7 455.0" stroke="#94a5c9" stroke-width="1.6"/><path d="M336.6 249.0 C338.8 251.0 344.1 254.0 349.8 260.8 C355.5 267.6 365.3 283.1 371.0 289.9 C376.7 296.7 376.3 297.4 384.2 301.8 C392.1 306.2 408.4 312.1 418.5 316.3 C428.6 320.5 434.9 324.3 445.0 326.9 C455.1 329.5 468.3 331.5 479.3 332.1 C490.3 332.8 503.9 328.2 511.0 330.8 C518.0 333.4 516.8 344.0 521.6 348.0 C526.4 352.0 536.9 353.5 540.0 354.6" stroke="#94a5c9" stroke-width="1.6"/><path d="M400.0 249.0 C406.6 251.8 430.1 261.8 439.6 266.0 C449.1 270.2 455.9 273.1 456.8 274.0 C457.7 274.9 447.0 271.8 445.0 271.4" stroke="#94a5c9" stroke-width="1.8"/><path d="M445.0 271.4 C453.8 274.9 478.4 284.1 497.8 292.5 C517.2 300.9 548.0 315.9 561.2 321.6 C574.4 327.3 569.1 323.2 577.0 326.9 C584.9 330.6 598.1 339.6 608.7 344.0 C619.3 348.4 633.6 349.1 640.4 353.3 C647.2 357.5 647.8 363.4 649.6 369.1 C651.4 374.8 651.6 381.0 651.0 387.6 C650.4 394.2 649.2 400.3 645.7 408.7 C642.2 417.1 636.0 429.9 629.8 437.8 C623.6 445.7 616.6 450.1 608.7 456.2 C600.8 462.3 590.7 470.9 582.3 474.7 C573.9 478.4 564.5 478.2 558.5 478.7 C552.5 479.1 548.1 477.6 546.0 477.4" stroke="#94a5c9" stroke-width="2.3"/><path d="M561.2 321.6 C559.4 326.0 555.5 339.6 550.6 348.0 C545.8 356.4 536.1 366.0 532.1 371.7 C528.1 377.4 526.9 375.2 526.9 382.3 C526.9 389.4 530.4 405.2 532.1 414.0 C533.9 422.8 535.4 426.7 537.4 435.1 C539.4 443.5 542.5 457.1 544.0 464.2 C545.5 471.2 545.8 475.2 546.1 477.4" stroke="#94a5c9" stroke-width="2.3"/><path d="M384.2 519.0 C391.7 513.0 415.4 495.8 429.0 482.7 C442.6 469.6 452.3 451.2 466.0 440.4 C479.7 429.6 500.0 422.4 511.0 418.0 C522.0 413.6 528.5 414.7 532.0 414.0" stroke="#94a5c9" stroke-width="1.8"/><path d="M645.7 403.4 C651.4 405.0 669.5 409.9 680.0 413.0 C690.5 416.1 698.2 419.2 709.0 422.0 C719.8 424.8 736.6 426.5 745.0 429.8 C753.4 433.1 749.9 437.7 759.3 441.7 C768.7 445.7 789.7 450.1 801.6 453.6 C813.5 457.1 821.4 459.8 830.6 462.9 C839.8 466.0 848.2 470.6 857.0 472.1 C865.8 473.6 875.5 467.7 883.4 472.1 C891.3 476.5 899.3 491.5 904.6 498.5 C909.9 505.5 907.6 510.9 915.1 514.3 C922.6 517.7 943.8 518.2 949.5 519.0" stroke="#94a5c9" stroke-width="2.1"/><path d="M643.0 419.3 C652.2 421.9 687.5 434.7 698.5 435.1 C709.5 435.6 707.2 424.2 709.0 422.0" stroke="#94a5c9" stroke-width="1.6"/><path d="M709.0 422.0 C711.7 419.8 717.9 413.6 725.0 408.7 C732.1 403.8 741.9 397.7 751.4 392.9 C760.9 388.1 768.6 386.8 781.8 379.7 C795.0 372.6 817.2 358.8 830.6 350.6 C844.0 342.5 849.1 338.3 862.3 330.8 C875.5 323.3 895.3 312.5 909.8 305.7 C924.3 298.9 936.3 295.2 949.5 289.9 C962.7 284.6 975.6 278.8 989.0 274.0 C1002.4 269.2 1018.2 264.7 1030.0 261.0 C1041.8 257.3 1055.0 253.5 1060.0 252.0" stroke="#94a5c9" stroke-width="2.5"/><path d="M622.0 448.3 C627.7 450.7 644.9 460.5 656.3 462.9 C667.7 465.3 675.8 457.4 690.6 462.9 C705.4 468.4 732.7 486.5 745.0 495.9 C757.3 505.2 761.3 515.1 764.6 519.0" stroke="#94a5c9" stroke-width="1.8"/><path d="M690.6 462.9 C687.1 466.2 674.4 473.3 669.5 482.7 C664.6 492.1 662.8 513.0 661.5 519.0" stroke="#94a5c9" stroke-width="1.6"/><path d="M706.4 249.0 C707.7 251.0 713.3 254.9 714.4 260.8 C715.5 266.7 711.7 278.4 713.0 284.6 C714.3 290.8 717.0 293.4 722.3 297.8 C727.6 302.2 740.1 307.0 745.0 311.0 C749.9 315.0 748.1 316.1 751.4 321.6 C754.7 327.1 762.4 340.3 764.6 344.0" stroke="#94a5c9" stroke-width="1.8"/><path d="M789.7 249.0 C788.4 252.3 783.3 260.7 781.8 268.8 C780.3 276.9 783.4 288.6 780.5 297.8 C777.6 307.0 767.7 316.5 764.6 324.2 C761.5 331.9 759.1 334.8 762.0 344.0 C764.9 353.2 776.5 368.0 781.8 379.7 C787.1 391.4 790.4 402.6 793.7 414.0 C797.0 425.4 801.0 439.1 801.6 448.3 C802.2 457.6 800.2 461.6 797.6 469.5 C795.0 477.4 791.2 487.6 785.7 495.9 C780.2 504.1 768.1 515.1 764.6 519.0" stroke="#94a5c9" stroke-width="2.1"/><path d="M764.6 344.0 C774.7 340.1 804.6 328.4 825.3 320.3 C846.0 312.2 868.0 303.4 888.7 295.2 C909.4 287.0 928.1 279.1 949.5 271.4 C970.9 263.7 1005.6 252.7 1016.8 249.0" stroke="#94a5c9" stroke-width="2.1"/><path d="M974.5 249.0 C974.5 252.7 974.9 263.3 974.5 271.4 C974.1 279.5 974.3 289.0 971.9 297.8 C969.5 306.6 964.6 315.4 960.0 324.2 C955.4 333.0 949.0 340.9 944.2 350.6 C939.4 360.3 935.0 372.6 931.0 382.3 C927.0 392.0 923.5 399.0 920.4 408.7 C917.3 418.4 915.1 429.8 912.5 440.4 C909.9 451.0 906.8 462.4 904.6 472.1 C902.4 481.8 900.6 490.7 899.3 498.5 C898.0 506.3 897.0 515.6 896.6 519.0" stroke="#94a5c9" stroke-width="2.1"/><path d="M897.0 304.0 C900.8 303.0 911.2 299.3 920.0 298.0 C928.8 296.7 941.3 297.3 950.0 296.0 C958.7 294.7 968.3 291.0 972.0 290.0" stroke="#94a5c9" stroke-width="0.9"/></g><rect x="377.6" y="353.3" width="17.1" height="6.6" rx="0.8" fill="#2f62b8" stroke="#fff" stroke-width="0.8"/><text x="386.1" y="358.8" font-size="6.1" font-weight="bold" fill="#fff" text-anchor="middle" textLength="14.7" lengthAdjust="spacingAndGlyphs">N290</text><rect x="384.0" y="389.0" width="11.0" height="7.0" rx="0.8" fill="#2f62b8" stroke="#fff" stroke-width="0.8"/><text x="389.5" y="394.8" font-size="6.4" font-weight="bold" fill="#fff" text-anchor="middle" textLength="8.6" lengthAdjust="spacingAndGlyphs">N8</text><rect x="293.6" y="396.0" width="14.0" height="7.4" rx="0.8" fill="#6b9d2c" stroke="#fff" stroke-width="0.8"/><text x="300.6" y="402.2" font-size="6.8" font-weight="bold" fill="#fff" text-anchor="middle" textLength="11.6" lengthAdjust="spacingAndGlyphs">E19</text><rect x="295.0" y="506.4" width="14.0" height="7.4" rx="0.8" fill="#6b9d2c" stroke="#fff" stroke-width="0.8"/><text x="302.0" y="512.6" font-size="6.8" font-weight="bold" fill="#fff" text-anchor="middle" textLength="11.6" lengthAdjust="spacingAndGlyphs">E19</text><rect x="425.0" y="476.0" width="11.5" height="6.7" rx="0.8" fill="#2f62b8" stroke="#fff" stroke-width="0.8"/><text x="430.8" y="481.6" font-size="6.2" font-weight="bold" fill="#fff" text-anchor="middle" textLength="9.1" lengthAdjust="spacingAndGlyphs">N6</text><rect x="496.5" y="292.0" width="15.8" height="8.0" rx="1.5" fill="#fff" stroke="#6c6c6c" stroke-width="0.8"/><text x="504.4" y="298.6" font-size="7.2" font-weight="bold" fill="#444" text-anchor="middle" textLength="13.4" lengthAdjust="spacingAndGlyphs">R20</text><rect x="561.7" y="286.0" width="21.9" height="7.3" rx="0.8" fill="#2f62b8" stroke="#fff" stroke-width="0.8"/><text x="572.7" y="292.1" font-size="6.7" font-weight="bold" fill="#fff" text-anchor="middle" textLength="19.5" lengthAdjust="spacingAndGlyphs">N260a</text><rect x="672.6" y="264.8" width="14.0" height="6.6" rx="0.8" fill="#2f62b8" stroke="#fff" stroke-width="0.8"/><text x="679.6" y="270.3" font-size="6.1" font-weight="bold" fill="#fff" text-anchor="middle" textLength="11.6" lengthAdjust="spacingAndGlyphs">N21</text><rect x="706.4" y="258.7" width="15.9" height="7.3" rx="1.5" fill="#fff" stroke="#6c6c6c" stroke-width="0.8"/><text x="714.3" y="264.8" font-size="6.7" font-weight="bold" fill="#444" text-anchor="middle" textLength="13.5" lengthAdjust="spacingAndGlyphs">R21</text><rect x="517.6" y="345.3" width="10.6" height="7.4" rx="0.8" fill="#2f62b8" stroke="#fff" stroke-width="0.8"/><text x="522.9" y="351.5" font-size="6.8" font-weight="bold" fill="#fff" text-anchor="middle" textLength="8.2" lengthAdjust="spacingAndGlyphs">N9</text><rect x="482.0" y="376.5" width="11.0" height="7.1" rx="0.8" fill="#2f62b8" stroke="#fff" stroke-width="0.8"/><text x="487.5" y="382.4" font-size="6.5" font-weight="bold" fill="#fff" text-anchor="middle" textLength="8.6" lengthAdjust="spacingAndGlyphs">N8</text><rect x="468.2" y="390.8" width="17.8" height="7.4" rx="0.8" fill="#2f62b8" stroke="#fff" stroke-width="0.8"/><text x="477.1" y="397.0" font-size="6.8" font-weight="bold" fill="#fff" text-anchor="middle" textLength="15.4" lengthAdjust="spacingAndGlyphs">N274</text><rect x="525.5" y="416.0" width="14.5" height="7.2" rx="1.5" fill="#fff" stroke="#6c6c6c" stroke-width="0.8"/><text x="532.8" y="422.0" font-size="6.6" font-weight="bold" fill="#444" text-anchor="middle" textLength="12.1" lengthAdjust="spacingAndGlyphs">R20</text><rect x="505.2" y="476.8" width="17.8" height="7.2" rx="0.8" fill="#2f62b8" stroke="#fff" stroke-width="0.8"/><text x="514.1" y="482.8" font-size="6.6" font-weight="bold" fill="#fff" text-anchor="middle" textLength="15.4" lengthAdjust="spacingAndGlyphs">N265</text><rect x="664.2" y="406.9" width="13.8" height="7.1" rx="0.8" fill="#2f62b8" stroke="#fff" stroke-width="0.8"/><text x="671.1" y="412.8" font-size="6.5" font-weight="bold" fill="#fff" text-anchor="middle" textLength="11.4" lengthAdjust="spacingAndGlyphs">N3a</text><rect x="649.6" y="461.0" width="11.4" height="6.6" rx="0.8" fill="#2f62b8" stroke="#fff" stroke-width="0.8"/><text x="655.3" y="466.5" font-size="6.1" font-weight="bold" fill="#fff" text-anchor="middle" textLength="9.0" lengthAdjust="spacingAndGlyphs">N4</text><rect x="713.0" y="459.4" width="17.0" height="6.9" rx="0.8" fill="#2f62b8" stroke="#fff" stroke-width="0.8"/><text x="721.5" y="465.1" font-size="6.3" font-weight="bold" fill="#fff" text-anchor="middle" textLength="14.6" lengthAdjust="spacingAndGlyphs">N205</text><rect x="719.6" y="356.4" width="11.1" height="7.4" rx="0.8" fill="#2f62b8" stroke="#fff" stroke-width="0.8"/><text x="725.2" y="362.6" font-size="6.8" font-weight="bold" fill="#fff" text-anchor="middle" textLength="8.7" lengthAdjust="spacingAndGlyphs">N2</text><rect x="974.5" y="250.3" width="14.5" height="7.4" rx="1.5" fill="#fff" stroke="#6c6c6c" stroke-width="0.8"/><text x="981.8" y="256.5" font-size="6.8" font-weight="bold" fill="#444" text-anchor="middle" textLength="12.1" lengthAdjust="spacingAndGlyphs">R22</text><rect x="820.6" y="316.3" width="10.8" height="7.4" rx="0.8" fill="#2f62b8" stroke="#fff" stroke-width="0.8"/><text x="826.0" y="322.5" font-size="6.8" font-weight="bold" fill="#fff" text-anchor="middle" textLength="8.4" lengthAdjust="spacingAndGlyphs">N2</text><rect x="853.0" y="329.5" width="13.8" height="7.9" rx="0.8" fill="#6b9d2c" stroke="#fff" stroke-width="0.8"/><text x="859.9" y="336.0" font-size="7.2" font-weight="bold" fill="#fff" text-anchor="middle" textLength="11.4" lengthAdjust="spacingAndGlyphs">E40</text><rect x="749.6" y="319.0" width="14.4" height="8.0" rx="1.5" fill="#fff" stroke="#6c6c6c" stroke-width="0.8"/><text x="756.8" y="325.6" font-size="7.2" font-weight="bold" fill="#444" text-anchor="middle" textLength="12.0" lengthAdjust="spacingAndGlyphs">R21</text><rect x="753.5" y="385.0" width="14.5" height="8.0" rx="0.8" fill="#2f62b8" stroke="#fff" stroke-width="0.8"/><text x="760.8" y="391.6" font-size="7.2" font-weight="bold" fill="#fff" text-anchor="middle" textLength="12.1" lengthAdjust="spacingAndGlyphs">N23</text><rect x="958.7" y="385.7" width="18.5" height="7.7" rx="0.8" fill="#2f62b8" stroke="#fff" stroke-width="0.8"/><text x="968.0" y="392.1" font-size="7.1" font-weight="bold" fill="#fff" text-anchor="middle" textLength="16.1" lengthAdjust="spacingAndGlyphs">N226</text><rect x="909.8" y="419.8" width="15.2" height="8.2" rx="1.5" fill="#fff" stroke="#6c6c6c" stroke-width="0.8"/><text x="917.4" y="426.5" font-size="7.2" font-weight="bold" fill="#444" text-anchor="middle" textLength="12.8" lengthAdjust="spacingAndGlyphs">R22</text><rect x="794.2" y="445.7" width="15.3" height="7.9" rx="1.5" fill="#fff" stroke="#6c6c6c" stroke-width="0.8"/><text x="801.9" y="452.2" font-size="7.2" font-weight="bold" fill="#444" text-anchor="middle" textLength="12.9" lengthAdjust="spacingAndGlyphs">R21</text><rect x="785.2" y="474.2" width="14.5" height="7.7" rx="1.5" fill="#fff" stroke="#6c6c6c" stroke-width="0.8"/><text x="792.5" y="480.6" font-size="7.1" font-weight="bold" fill="#444" text-anchor="middle" textLength="12.1" lengthAdjust="spacingAndGlyphs">R21</text><rect x="769.4" y="503.8" width="15.0" height="7.9" rx="1.5" fill="#fff" stroke="#6c6c6c" stroke-width="0.8"/><text x="776.9" y="510.3" font-size="7.2" font-weight="bold" fill="#444" text-anchor="middle" textLength="12.6" lengthAdjust="spacingAndGlyphs">R21</text><rect x="745.6" y="511.0" width="11.6" height="7.3" rx="0.8" fill="#2f62b8" stroke="#fff" stroke-width="0.8"/><text x="751.4" y="517.1" font-size="6.7" font-weight="bold" fill="#fff" text-anchor="middle" textLength="9.2" lengthAdjust="spacingAndGlyphs">N4</text><path d="M446 268 l-3.500 -4.500 a6.300 6.300 0 1 1 7 0z" fill="#78909c" stroke="#fff" stroke-width="1"/><path d="M446 254.500v7M443.800 257h4.400" stroke="#fff" stroke-width="1.300"/><path d="M976.4 359 l-4 -5 a6.8 6.8 0 1 1 8 0z" fill="#e8334a" stroke="#fff" stroke-width="0.8"/><text x="976.4" y="352" font-size="8" font-weight="bold" fill="#fff" text-anchor="middle">H</text><path d="M993 498 l-4 -5 a7 7 0 1 1 8 0z" fill="#1f9d61" stroke="#fff" stroke-width="0.8"/><circle cx="993" cy="487" r="3" fill="#fff"/><text x="290.4" y="263.3" font-size="6.5" font-weight="normal" fill="#2a9aa8" textLength="37.0" lengthAdjust="spacingAndGlyphs" paint-order="stroke" stroke="#fff" stroke-width="2.2" stroke-linejoin="round" >Elegembeek</text><text x="458.2" y="258.2" font-size="9.0" font-weight="normal" fill="#5b7c8d" textLength="93.8" lengthAdjust="spacingAndGlyphs" paint-order="stroke" stroke="#fff" stroke-width="2.2" stroke-linejoin="round" >Basilique Nationale du</text><text x="458.2" y="268.8" font-size="9.0" font-weight="normal" fill="#5b7c8d" textLength="103.8" lengthAdjust="spacingAndGlyphs" paint-order="stroke" stroke="#fff" stroke-width="2.2" stroke-linejoin="round" >Sacré-Cœur - Koekelberg</text><text x="323.4" y="289.4" font-size="9.5" font-weight="bold" fill="#1a1a1a" textLength="91.1" lengthAdjust="spacingAndGlyphs" paint-order="stroke" stroke="#fff" stroke-width="2.2" stroke-linejoin="round" >Sint-Agatha-Berchem</text><text x="381.5" y="323.7" font-size="9.5" font-weight="bold" fill="#1a1a1a" textLength="90.5" lengthAdjust="spacingAndGlyphs" paint-order="stroke" stroke="#fff" stroke-width="2.2" stroke-linejoin="round" >Sint-Jans-Molenbeek</text><text x="212.5" y="418.6" font-size="10.0" font-weight="bold" fill="#1a1a1a" textLength="30.9" lengthAdjust="spacingAndGlyphs" paint-order="stroke" stroke="#fff" stroke-width="2.2" stroke-linejoin="round" >Dilbeek</text><text x="171.0" y="451.6" font-size="5.5" font-weight="bold" fill="#333" textLength="30.0" lengthAdjust="spacingAndGlyphs" paint-order="stroke" stroke="#fff" stroke-width="2.2" stroke-linejoin="round" >TERBEEK</text><text x="367.0" y="510.5" font-size="12.5" font-weight="bold" fill="#1a1a1a" textLength="59.0" lengthAdjust="spacingAndGlyphs" paint-order="stroke" stroke="#fff" stroke-width="2.2" stroke-linejoin="round" >Anderlecht</text><text x="635.7" y="291.0" font-size="12.5" font-weight="bold" fill="#1a1a1a" textLength="64.1" lengthAdjust="spacingAndGlyphs" paint-order="stroke" stroke="#fff" stroke-width="2.2" stroke-linejoin="round" >Schaerbeek</text><text x="569.6" y="395.8" font-size="17.0" font-weight="normal" fill="#111" textLength="67.6" lengthAdjust="spacingAndGlyphs" paint-order="stroke" stroke="#fff" stroke-width="2.2" stroke-linejoin="round" >Brussels</text><text x="569.6" y="395.8" font-size="17.0" font-weight="normal" fill="#111" textLength="67.6" lengthAdjust="spacingAndGlyphs"  stroke="#111" stroke-width="0.45">Brussels</text><text x="541.4" y="458.2" font-size="5.2" font-weight="bold" fill="#333" textLength="35.6" lengthAdjust="spacingAndGlyphs" paint-order="stroke" stroke="#fff" stroke-width="2.2" stroke-linejoin="round" >MAROLLEN</text><text x="529.5" y="521.6" font-size="10.0" font-weight="bold" fill="#1a1a1a" textLength="47.5" lengthAdjust="spacingAndGlyphs" paint-order="stroke" stroke="#fff" stroke-width="2.2" stroke-linejoin="round" >Saint-Gilles</text><text x="646.2" y="516.6" font-size="10.0" font-weight="bold" fill="#1a1a1a" textLength="27.2" lengthAdjust="spacingAndGlyphs" paint-order="stroke" stroke="#fff" stroke-width="2.2" stroke-linejoin="round" >Ixelles</text><text x="712.2" y="499.5" font-size="10.0" font-weight="bold" fill="#1a1a1a" textLength="40.0" lengthAdjust="spacingAndGlyphs" paint-order="stroke" stroke="#fff" stroke-width="2.2" stroke-linejoin="round" >Etterbeek</text><text x="718.0" y="429.1" font-size="9.0" font-weight="normal" fill="#3a906a" textLength="30.0" lengthAdjust="spacingAndGlyphs" paint-order="stroke" stroke="#fff" stroke-width="2.2" stroke-linejoin="round" >Parc du</text><text x="702.5" y="439.6" font-size="9.0" font-weight="normal" fill="#3a906a" textLength="63.5" lengthAdjust="spacingAndGlyphs" paint-order="stroke" stroke="#fff" stroke-width="2.2" stroke-linejoin="round" >Cinquantenaire</text><text x="927.0" y="267.6" font-size="5.5" font-weight="bold" fill="#444" textLength="79.2" lengthAdjust="spacingAndGlyphs" paint-order="stroke" stroke="#fff" stroke-width="2.2" stroke-linejoin="round" >SINT-STEVENS WOLUWE</text><text x="975.9" y="306.2" font-size="10.0" font-weight="bold" fill="#1a1a1a" textLength="39.6" lengthAdjust="spacingAndGlyphs" paint-order="stroke" stroke="#fff" stroke-width="2.2" stroke-linejoin="round" >Kraainem</text><text x="989.0" y="348.7" font-size="9.5" font-weight="normal" fill="#d9304a" textLength="33.0" lengthAdjust="spacingAndGlyphs" paint-order="stroke" stroke="#fff" stroke-width="2.2" stroke-linejoin="round" >Clinique</text><text x="989.0" y="360.0" font-size="9.5" font-weight="normal" fill="#d9304a" textLength="39.0" lengthAdjust="spacingAndGlyphs" paint-order="stroke" stroke="#fff" stroke-width="2.2" stroke-linejoin="round" >Saint-Luc</text><text x="791.5" y="406.6" font-size="10.0" font-weight="bold" fill="#1a1a1a" textLength="97.2" lengthAdjust="spacingAndGlyphs" paint-order="stroke" stroke="#fff" stroke-width="2.2" stroke-linejoin="round" >Woluwe-Saint-Lambert</text><text x="852.5" y="484.1" font-size="10.0" font-weight="bold" fill="#1a1a1a" textLength="86.5" lengthAdjust="spacingAndGlyphs" paint-order="stroke" stroke="#fff" stroke-width="2.2" stroke-linejoin="round" >Woluwe-Saint-Pierre</text><text x="1003.0" y="491.2" font-size="9.0" font-weight="normal" fill="#188a52" textLength="37.0" lengthAdjust="spacingAndGlyphs" paint-order="stroke" stroke="#fff" stroke-width="2.2" stroke-linejoin="round" >Sportcity</text><text x="1012.0" y="410.5" font-size="7.0" font-weight="bold" fill="#333" textLength="4.0" lengthAdjust="spacingAndGlyphs" paint-order="stroke" stroke="#fff" stroke-width="2.2" stroke-linejoin="round" >s</text><g stroke="#c9d8f0" stroke-width="1.2" stroke-dasharray="3 3"><path d="M686.6 356 L660 344 M586.8 444 L546 477 M586.8 444 L640 400 L686 356"/></g><rect x="577.0" y="322.9" width="89.8" height="21.1" rx="7.0" fill="#fff" stroke="#e4ebf6" stroke-width="1"/><text x="586.0" y="337.9" font-size="12.5" fill="#5b667c" textLength="71.8" lengthAdjust="spacingAndGlyphs">Danny Wieme</text><rect x="732.7" y="355.0" width="125.6" height="21.7" rx="7.0" fill="#fff" stroke="#e4ebf6" stroke-width="1"/><text x="741.7" y="370.4" font-size="12.5" fill="#5b667c" textLength="107.6" lengthAdjust="spacingAndGlyphs">Kim De Temmerman</text><rect x="476.7" y="396.0" width="97.7" height="20.6" rx="7.0" fill="#fff" stroke="#e4ebf6" stroke-width="1"/><circle cx="489.1" cy="406.2" r="4.3" fill="#fff" stroke="#3dbb6a" stroke-width="1.2"/><circle cx="489.1" cy="406.2" r="2.3" fill="#3dbb6a"/><text x="498.7" y="410.8" font-size="12.5" fill="#5b667c" textLength="66.7" lengthAdjust="spacingAndGlyphs">Tech #1 Live</text><rect x="425.0" y="447.0" width="107.1" height="21.0" rx="7.0" fill="#fff" stroke="#e4ebf6" stroke-width="1"/><text x="434.0" y="462.4" font-size="13.5" fill="#5b667c" textLength="89.1" lengthAdjust="spacingAndGlyphs">Emma Lievens</text><circle cx="686.6" cy="355.9" r="18.5" fill="#3a89e5" opacity="0.22"/><circle cx="686.6" cy="355.9" r="12.6" fill="#2f7fe0"/><path d="M681.3 351.3 L693 356 L681.3 360.6 L683.6 356 Z" stroke="#fff" stroke-width="1.3" fill="none"/><path d="M586.8 444.6 C583 437 576.3 432.5 576.3 425.8 a10.5 10.5 0 0 1 21 0 C597.300 432.500 590.600 437 586.800 444.600z" fill="#f2b23e"/><circle cx="586.8" cy="425.6" r="7" fill="#fff"/><circle cx="546.1" cy="477.4" r="12.4" fill="#2fbf71"/><path d="M541 477.6 l3.4 3.4 l6.6 -6.8" stroke="#fff" stroke-width="1.6" fill="none"/><circle cx="872.3" cy="385.7" r="12" fill="#596379"/><circle cx="872.3" cy="385.7" r="5.2" stroke="#fff" stroke-width="1.4" fill="none"/><path d="M872.3 382.8 v3 h2.6" stroke="#fff" stroke-width="1.3" fill="none"/></svg></div>
  <div class="t" id="tj" style="left:171px;top:560px;font-size:24px;letter-spacing:0.55px;color:#3a4560">Today's Jobs</div>
  <div id="tbl">
    <div class="hd"></div>
    <div class="hl" style="top:48px"></div><div class="hl" style="top:111px"></div><div class="hl" style="top:175px"></div>
    <div class="vl" style="left:267px"></div><div class="vl" style="left:442px"></div><div class="vl" style="left:556px"></div><div class="vl" style="left:671px"></div>
  </div>
  <div class="t th" style="left:194px;top:624px;letter-spacing:0.26px">Customer</div>
  <div class="t th" style="left:459px;top:624px;letter-spacing:0.3px">Job type</div>
  <div class="t th" style="left:634px;top:624px;letter-spacing:-0.05px">Planned</div>
  <div class="t th" style="left:749px;top:624px;letter-spacing:-0.45px">Real ETA</div>
  <div class="t th" style="left:992px;top:624px;letter-spacing:0.2px">Status</div>

  <div class="t td" style="left:194px;top:678.3px;font-size:20.5px;letter-spacing:0.05px">Emma Lievens</div>
  <div class="t td" style="left:459px;top:678.3px;font-size:20.5px;letter-spacing:-0.2px">Repair</div>
  <div class="t td" style="left:634px;top:678px;letter-spacing:0.8px">08:00</div>
  <div class="t td" style="left:748px;top:678px;color:#2ea01e;letter-spacing:0.8px">07:48</div>

  <div class="t td" style="left:194px;top:738.800px;font-size:20.5px;letter-spacing:0.05px">Danny Wieme</div>
  <div class="t td" style="left:459px;top:738.800px;font-size:20.5px;letter-spacing:0.2px">Installation</div>
  <div class="t td" style="left:634px;top:741px;letter-spacing:0.8px">10:00</div>
  <div class="t td" style="left:748px;top:741px;color:#efa91d;letter-spacing:0.8px">09:48</div>

  <div class="t td" style="left:194px;top:804.800px;font-size:20.5px;letter-spacing:0.1px">Kim De Temmerman</div>
  <div class="t td" style="left:459px;top:804.800px;font-size:20.5px;letter-spacing:0.25px">Maintenance</div>
  <div class="t td" style="left:634px;top:806px;letter-spacing:0.8px">13:00</div>
  <div class="t td" style="left:748px;top:806px;color:#cf2340;letter-spacing:0.8px">12:48</div>

  <div class="badge" style="left:965px;top:665px;width:86px;background:#3cc46f"></div>
  <div class="t td" style="left:983px;top:677px;color:#fff;letter-spacing:0.5px">Done</div>
  <div class="badge" style="left:932px;top:730px;width:119px;background:#fdedc6;border:1px solid #f3d58a"></div>
  <div class="t td" style="left:951px;top:741px;color:#4a4a4a;letter-spacing:0.6px">On route</div>
  <div class="badge" style="left:872px;top:793px;width:179px;background:#fddcdf;border:1px solid #f3b3b9"></div>
  <div class="t td" style="left:891px;top:805px;color:#4a4a4a;letter-spacing:0.6px">Added to route</div>
</div></div>

<div id="phone"></div>
<div id="screen"><div id="scin">
  <div id="phead"></div>
  <svg class="abs" style="left:1184px;top:50px" width="112" height="14" viewBox="0 0 112 14"><path d="M0 0 C9 0 8 12 19 12 L93 12 C104 12 103 0 112 0 Z" fill="#fff"/></svg>
  <div class="t" id="ns" style="left:1067px;top:84px;font-size:23px;font-weight:bold;letter-spacing:0.35px;color:#fff">Next stop</div>
  <div class="t" id="md" style="left:1067px;top:111.8px;font-size:16.5px;letter-spacing:0.5px;color:#d5e5fa">Monday, November 23</div>
  <div id="map2"><svg width="405" height="216" viewBox="1038 152 405 216" font-family="Liberation Sans, Arial, sans-serif" fill="none" stroke-linecap="round" stroke-linejoin="round"><rect x="1038" y="152" width="405" height="216" fill="#f6f3f4"/><filter id="bl2" x="-20%" y="-20%" width="140%" height="140%"><feGaussianBlur stdDeviation="2.2"/></filter><g fill="#fbeed2" stroke="none" filter="url(#bl2)" opacity="0.6"><rect x="1228" y="190" width="20" height="40" rx="4" opacity="0.8"/><rect x="1250" y="180" width="30" height="30" rx="4" opacity="0.8"/><rect x="1240" y="230" width="40" height="26" rx="4" opacity="0.8"/><rect x="1262" y="262" width="30" height="20" rx="4" opacity="0.8"/><rect x="1225" y="320" width="30" height="48" rx="4" opacity="0.8"/><rect x="1270" y="300" width="50" height="30" rx="4" opacity="0.8"/><rect x="1300" y="330" width="40" height="30" rx="4" opacity="0.8"/><rect x="1320" y="270" width="30" height="24" rx="4" opacity="0.8"/><rect x="1340" y="225" width="24" height="20" rx="4" opacity="0.8"/><rect x="1080" y="295" width="36" height="14" rx="4" opacity="0.8"/><rect x="1300" y="205" width="14" height="22" rx="4" opacity="0.8"/><rect x="1255" y="345" width="40" height="23" rx="4" opacity="0.8"/><rect x="1345" y="300" width="30" height="10" rx="4" opacity="0.8"/></g><path d="M1098.0 200.0 C1102.7 199.0 1121.2 191.7 1126.0 194.0 C1130.8 196.3 1129.3 210.7 1127.0 214.0 C1124.7 217.3 1116.8 216.3 1112.0 214.0 C1107.2 211.7 1100.3 202.3 1098.0 200.0Z" fill="#c9ecd6" stroke="none"/><path d="M1108.0 176.0 C1109.3 175.3 1114.3 170.3 1116.0 172.0 C1117.7 173.7 1119.0 183.3 1118.0 186.0 C1117.0 188.7 1111.7 189.7 1110.0 188.0 C1108.3 186.3 1108.3 178.0 1108.0 176.0Z" fill="#c9ecd6" stroke="none"/><path d="M1079.0 262.0 C1081.3 261.0 1090.2 254.3 1093.0 256.0 C1095.8 257.7 1097.8 269.2 1096.0 272.0 C1094.2 274.8 1084.8 274.7 1082.0 273.0 C1079.2 271.3 1079.5 263.8 1079.0 262.0Z" fill="#c9ecd6" stroke="none"/><path d="M1038.0 304.0 C1040.0 304.7 1047.7 304.7 1050.0 308.0 C1052.3 311.3 1054.0 320.3 1052.0 324.0 C1050.0 327.7 1040.3 333.3 1038.0 330.0 C1035.7 326.7 1038.0 308.3 1038.0 304.0Z" fill="#c9ecd6" stroke="none"/><path d="M1045.0 172.0 C1046.3 171.3 1051.2 167.0 1053.0 168.0 C1054.8 169.0 1057.0 175.7 1056.0 178.0 C1055.0 180.3 1048.8 183.0 1047.0 182.0 C1045.2 181.0 1045.3 173.7 1045.0 172.0Z" fill="#c9ecd6" stroke="none"/><path d="M1040.0 156.0 C1041.7 155.7 1048.7 152.7 1050.0 154.0 C1051.3 155.3 1049.7 162.0 1048.0 164.0 C1046.3 166.0 1041.3 167.3 1040.0 166.0 C1038.7 164.7 1040.0 157.7 1040.0 156.0Z" fill="#c9ecd6" stroke="none"/><path d="M1286.0 233.0 C1289.3 232.7 1302.8 227.2 1306.0 231.0 C1309.2 234.8 1308.5 252.0 1305.0 256.0 C1301.5 260.0 1288.2 258.8 1285.0 255.0 C1281.8 251.2 1285.8 236.7 1286.0 233.0Z" fill="#c9ecd6" stroke="none"/><path d="M1384.0 258.0 C1386.3 256.7 1392.0 250.3 1398.0 250.0 C1404.0 249.7 1415.3 252.7 1420.0 256.0 C1424.7 259.3 1427.3 265.7 1426.0 270.0 C1424.7 274.3 1417.7 280.3 1412.0 282.0 C1406.3 283.7 1396.7 284.0 1392.0 280.0 C1387.3 276.0 1385.3 261.7 1384.0 258.0Z" fill="#c9ecd6" stroke="none"/><path d="M1348.0 272.0 C1350.3 271.7 1359.8 266.7 1362.0 270.0 C1364.2 273.3 1363.0 288.7 1361.0 292.0 C1359.0 295.3 1352.2 293.3 1350.0 290.0 C1347.8 286.7 1348.3 275.0 1348.0 272.0Z" fill="#c9ecd6" stroke="none"/><path d="M1367.0 224.0 C1368.7 224.0 1375.3 222.5 1377.0 224.0 C1378.7 225.5 1378.7 231.5 1377.0 233.0 C1375.3 234.5 1368.7 234.5 1367.0 233.0 C1365.3 231.5 1367.0 225.5 1367.0 224.0Z" fill="#c9ecd6" stroke="none"/><path d="M1352.0 160.0 C1353.0 159.7 1357.3 152.7 1358.0 158.0 C1358.7 163.3 1357.3 186.7 1356.0 192.0 C1354.7 197.3 1350.7 195.3 1350.0 190.0 C1349.3 184.7 1351.7 165.0 1352.0 160.0Z" fill="#c9ecd6" stroke="none"/><path d="M1240.0 154.0 C1241.7 153.8 1248.7 151.7 1250.0 153.0 C1251.3 154.3 1249.7 160.3 1248.0 162.0 C1246.3 163.7 1241.3 164.3 1240.0 163.0 C1238.7 161.7 1240.0 155.5 1240.0 154.0Z" fill="#c9ecd6" stroke="none"/><g fill="#8fd4ea" stroke="none"><ellipse cx="1354.500" cy="229.500" rx="3" ry="4.5"/><ellipse cx="1357" cy="280" rx="2" ry="6"/><ellipse cx="1327" cy="365" rx="2.5" ry="6"/></g><g stroke="#86d3ea"><path d="M1073.4 368.0 C1078.1 361.2 1094.4 337.7 1101.6 327.3 C1108.8 316.9 1114.3 309.2 1116.8 305.6" stroke-width="5"/><path d="M1116.8 305.6 C1116.6 303.1 1112.8 299.1 1115.7 290.4 C1118.6 281.7 1126.0 264.4 1134.1 253.5 C1142.2 242.7 1154.0 233.4 1164.5 225.3 C1175.0 217.2 1191.6 208.1 1197.0 204.7" stroke-width="1.5" opacity="0.85"/></g><g stroke="#e2e4e8"><path d="M1130.0 368.0 C1133.3 363.3 1142.5 348.0 1150.0 340.0 C1157.5 332.0 1166.7 328.3 1175.0 320.0 C1183.3 311.7 1195.8 295.0 1200.0 290.0" stroke-width="6"/><path d="M1150.0 368.0 C1151.7 363.3 1153.3 348.3 1160.0 340.0 C1166.7 331.7 1185.0 321.7 1190.0 318.0" stroke-width="3"/></g><g><path d="M1038.0 240.0 C1041.7 243.7 1053.0 256.0 1060.0 262.0 C1067.0 268.0 1073.0 272.7 1080.0 276.0 C1087.0 279.3 1095.3 278.0 1102.0 282.0 C1108.7 286.0 1117.0 297.0 1120.0 300.0" stroke="#dddfe5" stroke-width="1.5"/><path d="M1102.0 282.0 C1106.3 279.7 1120.0 273.3 1128.0 268.0 C1136.0 262.7 1146.3 253.0 1150.0 250.0" stroke="#dddfe5" stroke-width="1.5"/><path d="M1120.0 170.0 C1119.3 175.0 1114.7 191.3 1116.0 200.0 C1117.3 208.7 1126.7 211.7 1128.0 222.0 C1129.3 232.3 1123.7 249.0 1124.0 262.0 C1124.3 275.0 1126.5 288.7 1130.0 300.0 C1133.5 311.3 1142.5 325.0 1145.0 330.0" stroke="#dddfe5" stroke-width="1.5"/><path d="M1150.0 168.0 C1148.3 173.3 1143.7 191.0 1140.0 200.0 C1136.3 209.0 1130.0 218.3 1128.0 222.0" stroke="#dddfe5" stroke-width="1.5"/><path d="M1074.0 300.0 C1078.3 299.3 1093.0 297.3 1100.0 296.0 C1107.0 294.7 1113.3 292.7 1116.0 292.0" stroke="#dddfe5" stroke-width="1.5"/><path d="M1120.0 300.0 C1125.0 302.0 1141.3 307.3 1150.0 312.0 C1158.7 316.7 1167.0 322.5 1172.0 328.0 C1177.0 333.5 1177.7 338.3 1180.0 345.0 C1182.3 351.7 1185.0 364.2 1186.0 368.0" stroke="#dddfe5" stroke-width="1.5"/><path d="M1100.0 345.0 C1105.0 342.5 1118.0 332.8 1130.0 330.0 C1142.0 327.2 1158.7 327.7 1172.0 328.0 C1185.3 328.3 1203.7 331.3 1210.0 332.0" stroke="#dddfe5" stroke-width="1.5"/><path d="M1140.0 368.0 C1143.3 363.3 1152.5 351.3 1160.0 340.0 C1167.5 328.7 1177.5 310.0 1185.0 300.0 C1192.5 290.0 1201.7 283.3 1205.0 280.0" stroke="#dddfe5" stroke-width="1.5"/><path d="M1160.0 282.0 C1165.0 282.7 1182.5 286.3 1190.0 286.0 C1197.5 285.7 1202.5 281.0 1205.0 280.0" stroke="#dddfe5" stroke-width="1.5"/><path d="M1194.0 240.0 C1200.0 238.7 1220.7 232.0 1230.0 232.0 C1239.3 232.0 1244.7 235.0 1250.0 240.0 C1255.3 245.0 1260.0 258.3 1262.0 262.0" stroke="#dddfe5" stroke-width="1.5"/><path d="M1206.0 280.0 C1211.7 277.0 1230.7 265.0 1240.0 262.0 C1249.3 259.0 1254.3 258.3 1262.0 262.0 C1269.7 265.7 1282.0 280.3 1286.0 284.0" stroke="#dddfe5" stroke-width="1.5"/><path d="M1230.0 160.0 C1231.7 165.0 1239.0 180.8 1240.0 190.0 C1241.0 199.2 1236.7 210.8 1236.0 215.0" stroke="#dddfe5" stroke-width="1.5"/><path d="M1262.0 172.0 C1263.0 176.7 1263.3 193.7 1268.0 200.0 C1272.7 206.3 1282.7 207.7 1290.0 210.0 C1297.3 212.3 1308.3 213.3 1312.0 214.0" stroke="#dddfe5" stroke-width="1.5"/><path d="M1236.0 315.0 C1234.3 320.0 1229.5 336.2 1226.0 345.0 C1222.5 353.8 1216.8 364.2 1215.0 368.0" stroke="#dddfe5" stroke-width="1.5"/><path d="M1243.0 312.0 C1247.5 316.7 1262.2 330.7 1270.0 340.0 C1277.8 349.3 1286.7 363.3 1290.0 368.0" stroke="#dddfe5" stroke-width="1.5"/><path d="M1262.0 299.0 C1266.7 302.5 1282.0 313.2 1290.0 320.0 C1298.0 326.8 1303.3 332.0 1310.0 340.0 C1316.7 348.0 1326.7 363.3 1330.0 368.0" stroke="#dddfe5" stroke-width="1.5"/><path d="M1316.0 214.0 C1321.7 213.7 1338.5 214.3 1350.0 212.0 C1361.5 209.7 1373.3 205.3 1385.0 200.0 C1396.7 194.7 1410.3 185.0 1420.0 180.0 C1429.7 175.0 1439.2 171.7 1443.0 170.0" stroke="#dddfe5" stroke-width="1.5"/><path d="M1330.0 152.0 C1331.7 156.7 1336.7 170.0 1340.0 180.0 C1343.3 190.0 1348.0 200.3 1350.0 212.0 C1352.0 223.7 1351.7 243.7 1352.0 250.0" stroke="#dddfe5" stroke-width="1.5"/><path d="M1300.0 160.0 C1306.7 161.7 1326.7 167.3 1340.0 170.0 C1353.3 172.7 1365.0 174.3 1380.0 176.0 C1395.0 177.7 1421.7 179.3 1430.0 180.0" stroke="#dddfe5" stroke-width="1.5"/><path d="M1372.0 230.0 C1372.7 225.0 1373.0 209.0 1376.0 200.0 C1379.0 191.0 1386.0 184.0 1390.0 176.0 C1394.0 168.0 1398.3 156.0 1400.0 152.0" stroke="#dddfe5" stroke-width="1.5"/><path d="M1372.0 230.0 L1372.0 256.0" stroke="#dddfe5" stroke-width="1.5"/><path d="M1345.0 228.0 C1349.5 228.3 1362.8 230.3 1372.0 230.0 C1381.2 229.7 1392.0 226.7 1400.0 226.0 C1408.0 225.3 1416.7 226.0 1420.0 226.0" stroke="#dddfe5" stroke-width="1.5"/><path d="M1290.0 288.0 C1291.7 291.7 1295.3 302.2 1300.0 310.0 C1304.7 317.8 1311.3 328.3 1318.0 335.0 C1324.7 341.7 1333.0 344.5 1340.0 350.0 C1347.0 355.5 1356.7 365.0 1360.0 368.0" stroke="#dddfe5" stroke-width="1.5"/><path d="M1358.0 300.0 C1363.3 299.2 1379.7 295.0 1390.0 295.0 C1400.3 295.0 1411.2 299.8 1420.0 300.0 C1428.8 300.2 1439.2 296.7 1443.0 296.0" stroke="#dddfe5" stroke-width="1.5"/><path d="M1382.0 312.0 C1385.0 310.0 1395.0 305.0 1400.0 300.0 C1405.0 295.0 1410.0 285.0 1412.0 282.0" stroke="#dddfe5" stroke-width="1.5"/><path d="M1404.0 334.0 C1406.7 331.7 1413.5 323.7 1420.0 320.0 C1426.5 316.3 1439.2 313.3 1443.0 312.0" stroke="#dddfe5" stroke-width="1.5"/><path d="M1340.0 345.0 C1345.0 343.8 1359.3 339.8 1370.0 338.0 C1380.7 336.2 1398.3 334.7 1404.0 334.0" stroke="#dddfe5" stroke-width="1.5"/><path d="M1420.0 226.0 C1421.7 230.0 1426.2 244.0 1430.0 250.0 C1433.8 256.0 1440.8 260.0 1443.0 262.0" stroke="#dddfe5" stroke-width="1.5"/><path d="M1316.0 240.0 C1320.0 239.3 1333.5 235.0 1340.0 236.0 C1346.5 237.0 1352.5 244.3 1355.0 246.0" stroke="#dddfe5" stroke-width="1.5"/><path d="M1395.0 152.0 C1397.5 156.7 1405.0 172.0 1410.0 180.0 C1415.0 188.0 1420.3 197.3 1425.0 200.0 C1429.7 202.7 1435.8 196.7 1438.0 196.0" stroke="#dddfe5" stroke-width="1.5"/></g><g><path d="M1243.0 315.0 C1246.2 319.2 1254.2 331.2 1262.0 340.0 C1269.8 348.8 1285.3 363.3 1290.0 368.0" stroke="#b5bfd2" stroke-width="1.8"/><path d="M1093.0 155.8 C1089.7 159.4 1079.2 172.4 1073.4 177.5 C1067.6 182.6 1062.9 182.2 1058.2 186.2 C1053.5 190.2 1048.1 194.5 1045.2 201.4 C1042.3 208.3 1042.0 221.6 1040.8 227.4 C1039.6 233.2 1038.5 234.7 1038.0 236.1" stroke="#7387b0" stroke-width="3.8"/><path d="M1078.0 152.0 C1080.5 152.6 1086.5 154.1 1093.0 155.8 C1099.5 157.5 1107.4 160.6 1116.8 162.4 C1126.2 164.2 1139.2 166.2 1149.3 166.7 C1159.4 167.2 1171.0 163.1 1177.5 165.6 C1184.0 168.1 1183.5 177.7 1188.4 181.9 C1193.3 186.1 1203.7 189.2 1206.8 190.6" stroke="#7387b0" stroke-width="3.5"/><path d="M1038.0 229.0 C1047.5 227.8 1076.1 224.4 1095.0 222.0 C1113.9 219.6 1136.7 216.4 1151.5 214.4 C1166.3 212.4 1177.1 210.1 1184.0 210.1 C1190.9 210.1 1191.2 213.7 1192.7 214.4" stroke="#7387b0" stroke-width="4.0"/><path d="M1216.6 151.5 C1218.4 152.6 1227.4 153.7 1227.4 158.0 C1227.4 162.3 1220.0 172.1 1216.6 177.5 C1213.2 182.9 1210.1 185.5 1206.8 190.6 C1203.5 195.7 1199.3 203.9 1197.0 207.9 C1194.7 211.9 1193.0 210.4 1192.7 214.4 C1192.4 218.4 1193.6 225.3 1194.9 231.8 C1196.2 238.3 1198.5 245.6 1200.3 253.5 C1202.1 261.4 1203.9 271.6 1205.7 279.5 C1207.5 287.4 1209.4 295.8 1211.2 301.2 C1213.0 306.6 1212.4 309.8 1216.6 312.1 C1220.8 314.5 1231.7 315.3 1236.1 315.3 C1240.5 315.3 1238.6 314.7 1243.0 312.0 C1247.4 309.3 1255.3 303.7 1262.5 299.0 C1269.7 294.3 1280.2 288.2 1286.4 283.9 C1292.6 279.6 1296.1 276.6 1299.4 273.0 C1302.7 269.4 1303.8 267.3 1306.0 262.2 C1308.2 257.1 1310.6 248.4 1312.4 242.6 C1314.2 236.8 1316.1 232.1 1316.8 227.4 C1317.5 222.7 1317.5 219.8 1316.8 214.4 C1316.1 209.0 1314.6 199.3 1312.4 195.0 C1310.2 190.7 1312.1 192.4 1303.8 188.4 C1295.5 184.4 1275.2 176.1 1262.5 171.0 C1249.8 165.9 1233.2 160.2 1227.4 158.0" stroke="#7387b0" stroke-width="4.0"/><path d="M1038.0 362.0 C1042.1 358.4 1053.0 348.3 1062.5 340.3 C1072.0 332.3 1086.1 322.5 1095.0 314.2 C1103.9 305.9 1108.8 296.9 1115.7 290.4 C1122.6 283.9 1128.2 280.3 1136.3 275.2 C1144.4 270.1 1154.4 265.2 1164.5 260.0 C1174.6 254.8 1191.6 246.4 1197.0 243.7" stroke="#7387b0" stroke-width="3.8"/><path d="M1315.7 238.3 C1321.7 240.1 1341.9 246.1 1351.5 249.2 C1361.1 252.3 1366.0 257.4 1373.2 256.7 C1380.4 256.0 1387.0 249.9 1394.9 244.8 C1402.9 239.8 1412.8 230.7 1420.9 226.4 C1429.0 222.1 1439.6 220.1 1443.3 218.8" stroke="#7387b0" stroke-width="3.8"/><path d="M1310.3 255.7 C1315.0 257.1 1330.2 261.8 1338.5 264.3 C1346.8 266.8 1355.1 270.4 1360.2 270.8 C1365.3 271.2 1366.7 268.9 1368.9 266.5 C1371.1 264.1 1367.4 256.7 1373.2 256.7 C1379.0 256.7 1391.9 262.5 1403.6 266.5 C1415.3 270.5 1436.7 278.2 1443.3 280.6" stroke="#7387b0" stroke-width="3.5"/><path d="M1287.5 285.0 C1288.0 285.5 1285.8 286.2 1290.7 288.2 C1295.6 290.2 1306.0 295.3 1316.8 296.9 C1327.6 298.5 1344.9 295.5 1355.8 298.0 C1366.7 300.5 1373.9 306.0 1381.9 312.0 C1389.9 318.0 1397.4 327.3 1403.6 333.8 C1409.8 340.3 1413.4 345.3 1418.8 351.0 C1424.2 356.7 1433.1 365.2 1436.0 368.0" stroke="#7387b0" stroke-width="3.8"/><path d="M1355.8 298.0 C1356.2 298.9 1360.9 300.0 1358.0 303.4 C1355.1 306.8 1343.6 312.5 1338.5 318.6 C1333.4 324.8 1331.6 332.1 1327.6 340.3 C1323.6 348.5 1316.8 363.4 1314.6 368.0" stroke="#7387b0" stroke-width="3.5"/><path d="M1425.3 152.0 C1426.4 156.6 1429.6 172.5 1431.8 179.7 C1434.0 186.8 1436.4 189.8 1438.3 194.9 C1440.2 200.0 1442.5 207.5 1443.3 210.0" stroke="#7387b0" stroke-width="3.8"/><path d="M1410.0 368.0 L1443.3 344.6" stroke="#7387b0" stroke-width="3.8"/><path d="M1093.0 155.8 C1089.7 159.4 1079.2 172.4 1073.4 177.5 C1067.6 182.6 1062.9 182.2 1058.2 186.2 C1053.5 190.2 1048.1 194.5 1045.2 201.4 C1042.3 208.3 1042.0 221.6 1040.8 227.4 C1039.6 233.2 1038.5 234.7 1038.0 236.1" stroke="#94a5c9" stroke-width="2.1"/><path d="M1078.0 152.0 C1080.5 152.6 1086.5 154.1 1093.0 155.8 C1099.5 157.5 1107.4 160.6 1116.8 162.4 C1126.2 164.2 1139.2 166.2 1149.3 166.7 C1159.4 167.2 1171.0 163.1 1177.5 165.6 C1184.0 168.1 1183.5 177.7 1188.4 181.9 C1193.3 186.1 1203.7 189.2 1206.8 190.6" stroke="#94a5c9" stroke-width="1.8"/><path d="M1038.0 229.0 C1047.5 227.8 1076.1 224.4 1095.0 222.0 C1113.9 219.6 1136.7 216.4 1151.5 214.4 C1166.3 212.4 1177.1 210.1 1184.0 210.1 C1190.9 210.1 1191.2 213.7 1192.7 214.4" stroke="#94a5c9" stroke-width="2.3"/><path d="M1216.6 151.5 C1218.4 152.6 1227.4 153.7 1227.4 158.0 C1227.4 162.3 1220.0 172.1 1216.6 177.5 C1213.2 182.9 1210.1 185.5 1206.8 190.6 C1203.5 195.7 1199.3 203.9 1197.0 207.9 C1194.7 211.9 1193.0 210.4 1192.7 214.4 C1192.4 218.4 1193.6 225.3 1194.9 231.8 C1196.2 238.3 1198.5 245.6 1200.3 253.5 C1202.1 261.4 1203.9 271.6 1205.7 279.5 C1207.5 287.4 1209.4 295.8 1211.2 301.2 C1213.0 306.6 1212.4 309.8 1216.6 312.1 C1220.8 314.5 1231.7 315.3 1236.1 315.3 C1240.5 315.3 1238.6 314.7 1243.0 312.0 C1247.4 309.3 1255.3 303.7 1262.5 299.0 C1269.7 294.3 1280.2 288.2 1286.4 283.9 C1292.6 279.6 1296.1 276.6 1299.4 273.0 C1302.7 269.4 1303.8 267.3 1306.0 262.2 C1308.2 257.1 1310.6 248.4 1312.4 242.6 C1314.2 236.8 1316.1 232.1 1316.8 227.4 C1317.5 222.7 1317.5 219.8 1316.8 214.4 C1316.1 209.0 1314.6 199.3 1312.4 195.0 C1310.2 190.7 1312.1 192.4 1303.8 188.4 C1295.5 184.4 1275.2 176.1 1262.5 171.0 C1249.8 165.9 1233.2 160.2 1227.4 158.0" stroke="#94a5c9" stroke-width="2.3"/><path d="M1038.0 362.0 C1042.1 358.4 1053.0 348.3 1062.5 340.3 C1072.0 332.3 1086.1 322.5 1095.0 314.2 C1103.9 305.9 1108.8 296.9 1115.7 290.4 C1122.6 283.9 1128.2 280.3 1136.3 275.2 C1144.4 270.1 1154.4 265.2 1164.5 260.0 C1174.6 254.8 1191.6 246.4 1197.0 243.7" stroke="#94a5c9" stroke-width="2.1"/><path d="M1315.7 238.3 C1321.7 240.1 1341.9 246.1 1351.5 249.2 C1361.1 252.3 1366.0 257.4 1373.2 256.7 C1380.4 256.0 1387.0 249.9 1394.9 244.8 C1402.9 239.8 1412.8 230.7 1420.9 226.4 C1429.0 222.1 1439.6 220.1 1443.3 218.8" stroke="#94a5c9" stroke-width="2.1"/><path d="M1310.3 255.7 C1315.0 257.1 1330.2 261.8 1338.5 264.3 C1346.8 266.8 1355.1 270.4 1360.2 270.8 C1365.3 271.2 1366.7 268.9 1368.9 266.5 C1371.1 264.1 1367.4 256.7 1373.2 256.7 C1379.0 256.7 1391.9 262.5 1403.6 266.5 C1415.3 270.5 1436.7 278.2 1443.3 280.6" stroke="#94a5c9" stroke-width="1.8"/><path d="M1287.5 285.0 C1288.0 285.5 1285.8 286.2 1290.7 288.2 C1295.6 290.2 1306.0 295.3 1316.8 296.9 C1327.6 298.5 1344.9 295.5 1355.8 298.0 C1366.7 300.5 1373.9 306.0 1381.9 312.0 C1389.9 318.0 1397.4 327.3 1403.6 333.8 C1409.8 340.3 1413.4 345.3 1418.8 351.0 C1424.2 356.7 1433.1 365.2 1436.0 368.0" stroke="#94a5c9" stroke-width="2.1"/><path d="M1355.8 298.0 C1356.2 298.9 1360.9 300.0 1358.0 303.4 C1355.1 306.8 1343.6 312.5 1338.5 318.6 C1333.4 324.8 1331.6 332.1 1327.6 340.3 C1323.6 348.5 1316.8 363.4 1314.6 368.0" stroke="#94a5c9" stroke-width="1.8"/><path d="M1425.3 152.0 C1426.4 156.6 1429.6 172.5 1431.8 179.7 C1434.0 186.8 1436.4 189.8 1438.3 194.9 C1440.2 200.0 1442.5 207.5 1443.3 210.0" stroke="#94a5c9" stroke-width="2.1"/><path d="M1410.0 368.0 L1443.3 344.6" stroke="#94a5c9" stroke-width="2.1"/></g><rect x="1044.0" y="188.4" width="17.5" height="6.6" rx="0.8" fill="#2f62b8" stroke="#fff" stroke-width="0.8"/><text x="1052.8" y="193.9" font-size="6.1" font-weight="bold" fill="#fff" text-anchor="middle" textLength="15.1" lengthAdjust="spacingAndGlyphs">N290</text><rect x="1050.6" y="224.2" width="10.9" height="6.5" rx="0.8" fill="#2f62b8" stroke="#fff" stroke-width="0.8"/><text x="1056.0" y="229.6" font-size="6.0" font-weight="bold" fill="#fff" text-anchor="middle" textLength="8.5" lengthAdjust="spacingAndGlyphs">N8</text><rect x="1148.2" y="211.2" width="10.8" height="6.5" rx="0.8" fill="#2f62b8" stroke="#fff" stroke-width="0.8"/><text x="1153.6" y="216.6" font-size="6.0" font-weight="bold" fill="#fff" text-anchor="middle" textLength="8.4" lengthAdjust="spacingAndGlyphs">N8</text><rect x="1134.8" y="225.7" width="17.8" height="6.7" rx="0.8" fill="#2f62b8" stroke="#fff" stroke-width="0.8"/><text x="1143.7" y="231.3" font-size="6.2" font-weight="bold" fill="#fff" text-anchor="middle" textLength="15.4" lengthAdjust="spacingAndGlyphs">N274</text><rect x="1184.5" y="180.0" width="10.0" height="7.3" rx="0.8" fill="#2f62b8" stroke="#fff" stroke-width="0.8"/><text x="1189.5" y="186.1" font-size="6.7" font-weight="bold" fill="#fff" text-anchor="middle" textLength="7.6" lengthAdjust="spacingAndGlyphs">N9</text><rect x="1192.3" y="249.8" width="13.9" height="8.0" rx="1.5" fill="#fff" stroke="#6c6c6c" stroke-width="0.8"/><text x="1199.2" y="256.4" font-size="7.2" font-weight="bold" fill="#444" text-anchor="middle" textLength="11.5" lengthAdjust="spacingAndGlyphs">R20</text><rect x="1091.8" y="311.0" width="10.9" height="7.0" rx="0.8" fill="#2f62b8" stroke="#fff" stroke-width="0.8"/><text x="1097.2" y="316.8" font-size="6.4" font-weight="bold" fill="#fff" text-anchor="middle" textLength="8.5" lengthAdjust="spacingAndGlyphs">N6</text><rect x="1172.0" y="311.6" width="17.5" height="7.0" rx="0.8" fill="#2f62b8" stroke="#fff" stroke-width="0.8"/><text x="1180.8" y="317.4" font-size="6.4" font-weight="bold" fill="#fff" text-anchor="middle" textLength="15.1" lengthAdjust="spacingAndGlyphs">N265</text><rect x="1415.5" y="154.0" width="14.1" height="8.4" rx="1.5" fill="#fff" stroke="#6c6c6c" stroke-width="0.8"/><text x="1422.5" y="160.8" font-size="7.2" font-weight="bold" fill="#444" text-anchor="middle" textLength="11.7" lengthAdjust="spacingAndGlyphs">R21</text><rect x="1385.8" y="191.6" width="10.8" height="7.2" rx="0.8" fill="#2f62b8" stroke="#fff" stroke-width="0.8"/><text x="1391.2" y="197.6" font-size="6.6" font-weight="bold" fill="#fff" text-anchor="middle" textLength="8.4" lengthAdjust="spacingAndGlyphs">N2</text><rect x="1419.8" y="220.5" width="14.2" height="6.9" rx="0.8" fill="#2f62b8" stroke="#fff" stroke-width="0.8"/><text x="1426.9" y="226.2" font-size="6.3" font-weight="bold" fill="#fff" text-anchor="middle" textLength="11.8" lengthAdjust="spacingAndGlyphs">N23</text><rect x="1329.8" y="241.5" width="14.2" height="7.2" rx="0.8" fill="#2f62b8" stroke="#fff" stroke-width="0.8"/><text x="1336.9" y="247.5" font-size="6.6" font-weight="bold" fill="#fff" text-anchor="middle" textLength="11.8" lengthAdjust="spacingAndGlyphs">N3a</text><rect x="1316.0" y="295.8" width="11.0" height="7.2" rx="0.8" fill="#2f62b8" stroke="#fff" stroke-width="0.8"/><text x="1321.5" y="301.8" font-size="6.6" font-weight="bold" fill="#fff" text-anchor="middle" textLength="8.6" lengthAdjust="spacingAndGlyphs">N4</text><rect x="1378.6" y="294.3" width="18.0" height="6.9" rx="0.8" fill="#2f62b8" stroke="#fff" stroke-width="0.8"/><text x="1387.6" y="300.0" font-size="6.3" font-weight="bold" fill="#fff" text-anchor="middle" textLength="15.6" lengthAdjust="spacingAndGlyphs">N205</text><rect x="1411.2" y="345.7" width="10.8" height="7.2" rx="0.8" fill="#2f62b8" stroke="#fff" stroke-width="0.8"/><text x="1416.6" y="351.7" font-size="6.6" font-weight="bold" fill="#fff" text-anchor="middle" textLength="8.4" lengthAdjust="spacingAndGlyphs">N4</text><rect x="1435.0" y="338.7" width="14.0" height="7.0" rx="1.5" fill="#fff" stroke="#6c6c6c" stroke-width="0.8"/><text x="1442.0" y="344.5" font-size="6.4" font-weight="bold" fill="#444" text-anchor="middle" textLength="11.6" lengthAdjust="spacingAndGlyphs">R22</text><text x="1048.4" y="159.2" font-size="9.5" font-weight="bold" fill="#1a1a1a" textLength="89.4" lengthAdjust="spacingAndGlyphs" paint-order="stroke" stroke="#fff" stroke-width="2.2" stroke-linejoin="round" >Sint-Jans-Molenbeek</text><text x="1038.0" y="344.5" font-size="12.5" font-weight="bold" fill="#1a1a1a" textLength="55.0" lengthAdjust="spacingAndGlyphs" paint-order="stroke" stroke="#fff" stroke-width="2.2" stroke-linejoin="round" >Anderlecht</text><text x="1196.0" y="356.7" font-size="9.5" font-weight="bold" fill="#1a1a1a" textLength="47.7" lengthAdjust="spacingAndGlyphs" paint-order="stroke" stroke="#fff" stroke-width="2.2" stroke-linejoin="round" >Saint-Gilles</text><text x="1236.0" y="230.9" font-size="17.0" font-weight="normal" fill="#111" textLength="67.3" lengthAdjust="spacingAndGlyphs" paint-order="stroke" stroke="#fff" stroke-width="2.2" stroke-linejoin="round" >Brussels</text><text x="1236.0" y="230.9" font-size="17.0" font-weight="normal" fill="#111" textLength="67.3" lengthAdjust="spacingAndGlyphs"  stroke="#111" stroke-width="0.45">Brussels</text><text x="1251.0" y="176.2" font-size="9.5" font-weight="normal" fill="#8a3fd6" textLength="42.4" lengthAdjust="spacingAndGlyphs" paint-order="stroke" stroke="#fff" stroke-width="2.2" stroke-linejoin="round" >Botanique</text><path d="M1305.500 182 l-4 -5 a6.600 6.600 0 1 1 8 0z" fill="#a24be8" stroke="#fff" stroke-width="0.8"/><rect x="1302.5" y="169" width="6" height="4.500" rx="0.8" fill="none" stroke="#fff" stroke-width="0.9"/><text x="1384.5" y="263.2" font-size="9.0" font-weight="normal" fill="#3a906a" textLength="31.5" lengthAdjust="spacingAndGlyphs" paint-order="stroke" stroke="#fff" stroke-width="2.2" stroke-linejoin="round" >Parc du</text><text x="1369.0" y="274.0" font-size="9.0" font-weight="normal" fill="#3a906a" textLength="63.0" lengthAdjust="spacingAndGlyphs" paint-order="stroke" stroke="#fff" stroke-width="2.2" stroke-linejoin="round" >Cinquantenaire</text><text x="1378.2" y="334.4" font-size="9.5" font-weight="bold" fill="#1a1a1a" textLength="40.1" lengthAdjust="spacingAndGlyphs" paint-order="stroke" stroke="#fff" stroke-width="2.2" stroke-linejoin="round" >Etterbeek</text><text x="1312.4" y="351.3" font-size="9.5" font-weight="bold" fill="#1a1a1a" textLength="26.7" lengthAdjust="spacingAndGlyphs" paint-order="stroke" stroke="#fff" stroke-width="2.2" stroke-linejoin="round" >Ixelles</text><text x="1208.0" y="292.7" font-size="5.2" font-weight="bold" fill="#333" textLength="32.0" lengthAdjust="spacingAndGlyphs" paint-order="stroke" stroke="#fff" stroke-width="2.2" stroke-linejoin="round" >MAROLLEN</text><text transform="translate(1128 362) rotate(-60)" font-size="7" fill="#2a9aa8" paint-order="stroke" stroke="#fff" stroke-width="1.5">La Senne</text><ellipse cx="1247" cy="319" rx="12" ry="4" fill="#9fb8dd" opacity="0.22"/><path d="M1242.3 317.900 C1240.300 313 1221.900 302 1221.900 281.800 a20.600 20.600 0 0 1 41.200 0 C1263.100 302 1244.300 313 1242.300 317.900z" fill="#3ac46f"/><circle cx="1242.5" cy="281.900" r="13.400" fill="#fff"/></svg></div>
  <div class="t" id="ad" style="left:1060px;top:397.5px;font-size:18px;letter-spacing:0.3px;color:#7c8696">Address</div>
  <div class="t" id="ad2" style="left:1060px;top:428px;font-size:23px;letter-spacing:0.2px;color:#3a4560">Nieuwstraat 5, Brussels</div>
  <div class="t" id="ts" style="left:1060px;top:476.5px;font-size:18px;letter-spacing:0.27px;color:#7c8696">Time slot</div>
  <div class="t" id="ts2" style="left:1060px;top:507px;font-size:23px;letter-spacing:0.6px;color:#3a4560">08:00 – 09:00 AM</div>
  <div class="btn" style="left:1057px;top:561.5px;width:366.5px;height:63px;background:#3a89e5;border:1px solid #3381de"></div>
  <svg class="abs" style="left:1174px;top:580px" width="27" height="27" viewBox="0 0 24 24" fill="none" stroke="#fff" stroke-width="2.1" stroke-linejoin="round" stroke-linecap="round"><path d="M3 11 L22 2 L13 21 L11 13 Z"/></svg>
  <div class="t" id="nv" style="left:1214px;top:582.5px;font-size:23px;letter-spacing:0.2px;color:#fff;-webkit-text-stroke:0.3px #fff">Navigate</div>
  <div class="btn" style="left:1057px;top:639px;width:176px;height:65px"></div>
  <div class="btn" style="left:1247px;top:639px;width:176px;height:65px"></div>
  <div class="t" id="ins" style="left:1094px;top:663px;font-size:18.5px;letter-spacing:0.6px;color:#2f3542;-webkit-text-stroke:0.15px #2f3542">Instructions</div>
  <div class="t" id="doc" style="left:1287px;top:663px;font-size:18.5px;letter-spacing:0.2px;color:#2f3542;-webkit-text-stroke:0.15px #2f3542">Documents</div>
  <div class="btn" style="left:1057px;top:718px;width:367px;height:67px"></div>
  <svg class="abs" style="left:1184px;top:740px" width="23" height="23" viewBox="0 0 24 24" fill="none" stroke="#2f3542" stroke-width="2" stroke-linecap="round" stroke-linejoin="round"><path d="M22 16.92v3a2 2 0 0 1-2.18 2 19.8 19.8 0 0 1-8.63-3.07 19.5 19.5 0 0 1-6-6A19.8 19.8 0 0 1 2.12 4.18 2 2 0 0 1 4.11 2h3a2 2 0 0 1 2 1.72c.13.96.36 1.9.7 2.81a2 2 0 0 1-.45 2.11L8.09 9.91a16 16 0 0 0 6 6l1.27-1.27a2 2 0 0 1 2.11-.45c.91.34 1.85.57 2.81.7A2 2 0 0 1 22 16.92z"/><path d="M14.05 2a9 9 0 0 1 8 7.94"/><path d="M14.05 6A5 5 0 0 1 18 10"/></svg>
  <div class="t" id="ct" style="left:1220px;top:740.5px;font-size:21px;letter-spacing:0.3px;color:#2f3542;-webkit-text-stroke:0.15px #2f3542">Contact</div>
</div></div>
</body>
</html>
